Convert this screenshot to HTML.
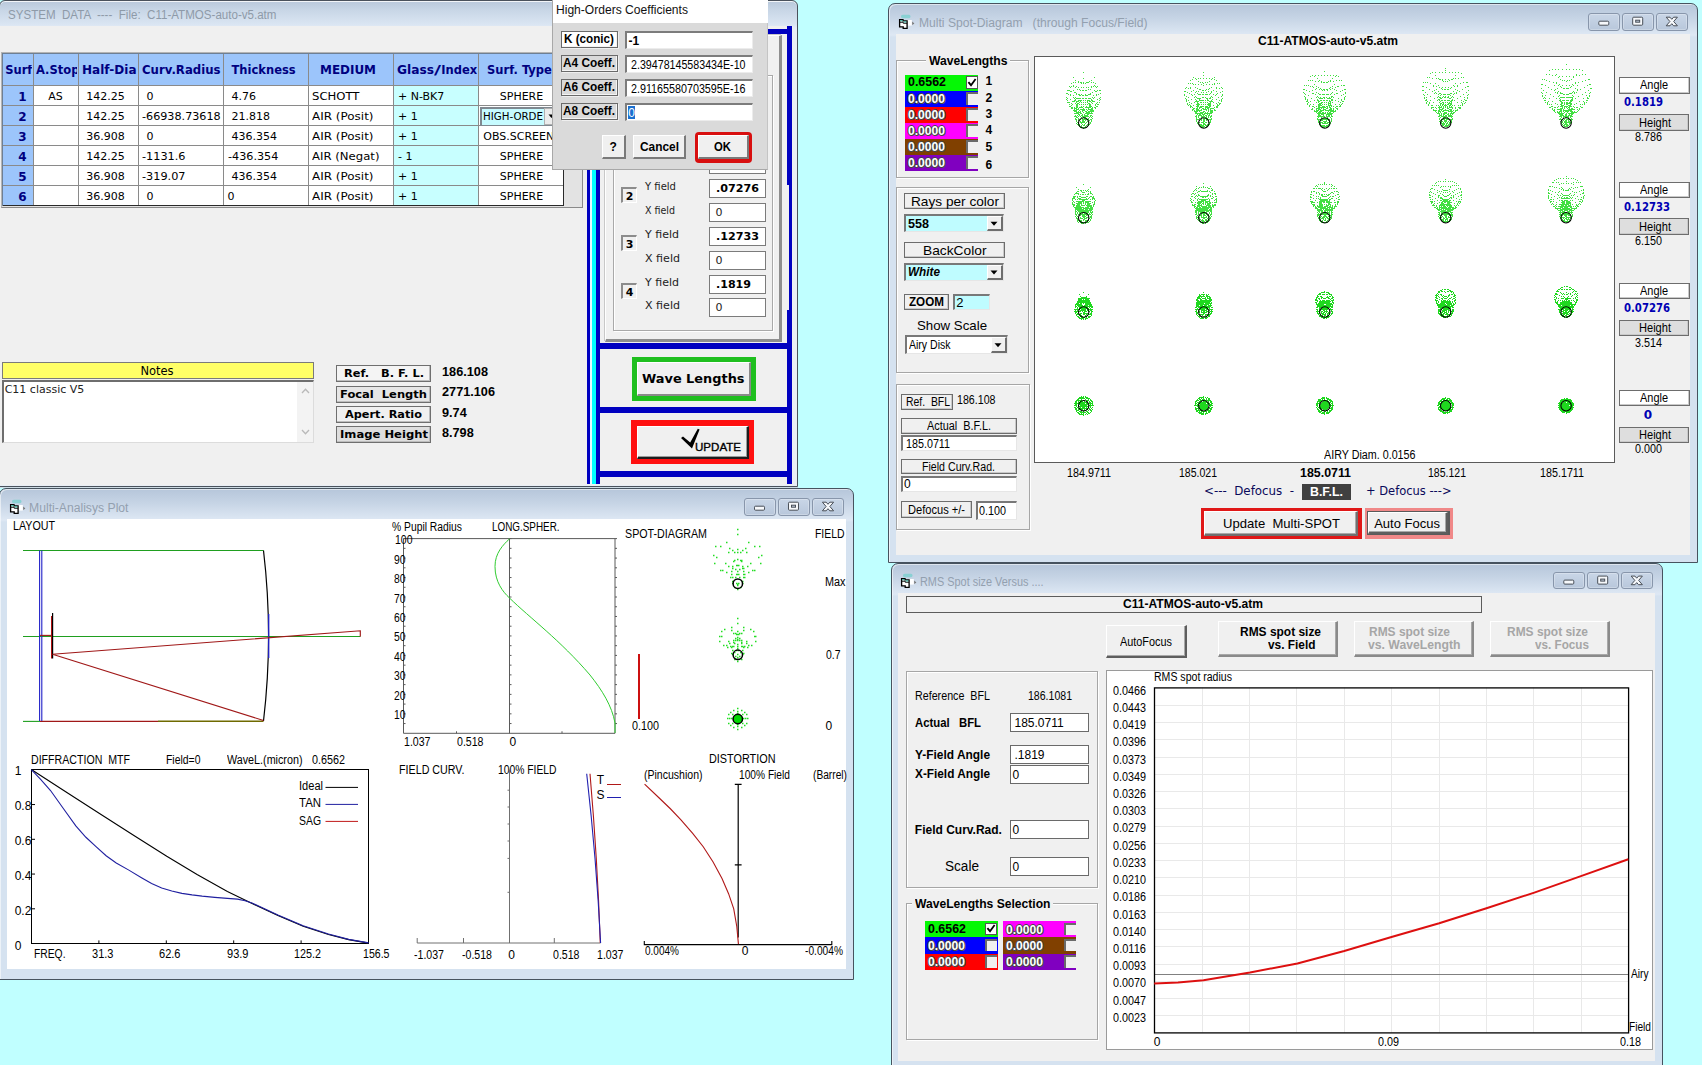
<!DOCTYPE html>
<html><head><meta charset="utf-8"><title>Optics workspace</title>
<style>
html,body{margin:0;padding:0}
body{width:1702px;height:1065px;overflow:hidden;background:#c0ffff;position:relative;font-family:"Liberation Sans",sans-serif}
.b{position:absolute;box-sizing:border-box;display:block}
.t{position:absolute;white-space:pre;transform-origin:0 0;color:#000}
svg{overflow:visible}
</style></head><body>
<div class="b" style="left:-1px;top:0px;width:799px;height:486.5px;background:linear-gradient(#bccbdd 2px,#c9d7e7 10px,#dbe6f3 24px,#e6edf6 27px,#e9eef5 30px);border:1px solid #4a525c;border-radius:6px 6px 0 0;box-shadow:inset 0 1px 0 rgba(255,255,255,.8);"></div>
<div class="b" style="left:0px;top:26px;width:793px;height:459px;background:#f0f0f0;"></div>
<div class="b" style="left:0px;top:487px;width:798px;height:1px;background:#cddbe4;"></div>
<span class="t" style="left:8.3px;top:8.55px;font:12px/12px 'Liberation Sans',sans-serif;color:#8e9aa8;transform:scaleX(0.964);">SYSTEM  DATA  ----  File:  C11-ATMOS-auto-v5.atm</span>
<div class="b" style="left:1px;top:52px;width:581.5px;height:156.3px;background:#e3e3e3;border:1px solid #8f8f8f;border-color:#b4b4b4 #8a8a8a #8a8a8a #b4b4b4;"></div>
<div class="b" style="left:2px;top:53px;width:561.5px;height:152.5px;background:#fff;"></div>
<div class="b" style="left:2px;top:53px;width:561.5px;height:32.5px;background:#9cc5fb;"></div>
<div class="b" style="left:2px;top:53px;width:31px;height:152.5px;background:#9cc5fb;"></div>
<div class="b" style="left:393.5px;top:85.5px;width:85px;height:120px;background:#c8ffff;"></div>
<div class="b" style="left:1.5px;top:53px;width:1px;height:152.5px;background:#8a8a8a;"></div>
<div class="b" style="left:32.5px;top:53px;width:1px;height:152.5px;background:#8a8a8a;"></div>
<div class="b" style="left:78px;top:53px;width:1px;height:152.5px;background:#8a8a8a;"></div>
<div class="b" style="left:138px;top:53px;width:1px;height:152.5px;background:#8a8a8a;"></div>
<div class="b" style="left:223px;top:53px;width:1px;height:152.5px;background:#8a8a8a;"></div>
<div class="b" style="left:308px;top:53px;width:1px;height:152.5px;background:#8a8a8a;"></div>
<div class="b" style="left:393px;top:53px;width:1px;height:152.5px;background:#8a8a8a;"></div>
<div class="b" style="left:478px;top:53px;width:1px;height:152.5px;background:#8a8a8a;"></div>
<div class="b" style="left:563px;top:53px;width:1px;height:152.5px;background:#8a8a8a;"></div>
<div class="b" style="left:2px;top:52.5px;width:561.5px;height:1px;background:#8a8a8a;"></div>
<div class="b" style="left:2px;top:85px;width:561.5px;height:1px;background:#8a8a8a;"></div>
<div class="b" style="left:2px;top:105px;width:561.5px;height:1px;background:#8a8a8a;"></div>
<div class="b" style="left:2px;top:125px;width:561.5px;height:1px;background:#8a8a8a;"></div>
<div class="b" style="left:2px;top:145px;width:561.5px;height:1px;background:#8a8a8a;"></div>
<div class="b" style="left:2px;top:165px;width:561.5px;height:1px;background:#8a8a8a;"></div>
<div class="b" style="left:2px;top:185px;width:561.5px;height:1px;background:#8a8a8a;"></div>
<div class="b" style="left:2px;top:205px;width:561.5px;height:1px;background:#8a8a8a;"></div>
<div class="b" style="left:2px;top:205px;width:562px;height:1px;background:#2a2a2a;"></div>
<div class="b" style="left:563px;top:53px;width:1px;height:153px;background:#2a2a2a;"></div>
<div class="b" style="left:1.5px;top:52.5px;width:562.5px;height:1px;background:#6d7f95;"></div>
<div class="b" style="left:1.5px;top:53px;width:1px;height:153px;background:#6d7f95;"></div>
<span class="t" style="left:5.2px;top:65.37px;font:bold 11.5px/11.5px 'DejaVu Sans','Liberation Sans',sans-serif;color:#000080;width:26.5px;overflow:hidden;padding-bottom:3px;">Surf</span>
<span class="t" style="left:36px;top:65.37px;font:bold 11.5px/11.5px 'DejaVu Sans','Liberation Sans',sans-serif;color:#000080;width:40.5px;overflow:hidden;padding-bottom:3px;">A.Stop</span>
<span class="t" style="left:82px;top:65.37px;font:bold 11.5px/11.5px 'DejaVu Sans','Liberation Sans',sans-serif;color:#000080;transform:scaleX(1.045);">Half-Dia</span>
<span class="t" style="left:142.3px;top:65.37px;font:bold 11.5px/11.5px 'DejaVu Sans','Liberation Sans',sans-serif;color:#000080;transform:scaleX(1.019);">Curv.Radius</span>
<span class="t" style="left:231.5px;top:65.37px;font:bold 11.5px/11.5px 'DejaVu Sans','Liberation Sans',sans-serif;color:#000080;">Thickness</span>
<span class="t" style="left:320px;top:65.37px;font:bold 11.5px/11.5px 'DejaVu Sans','Liberation Sans',sans-serif;color:#000080;transform:scaleX(1.039);">MEDIUM</span>
<span class="t" style="left:397px;top:65.37px;font:bold 11.5px/11.5px 'DejaVu Sans','Liberation Sans',sans-serif;color:#000080;transform:scaleX(1.062);">Glass</span>
<span class="t" style="left:434.4px;top:65.37px;font:bold 11.5px/11.5px 'DejaVu Sans','Liberation Sans',sans-serif;color:#000080;transform:scaleX(1.665);">/</span>
<span class="t" style="left:441.3px;top:65.37px;font:bold 11.5px/11.5px 'DejaVu Sans','Liberation Sans',sans-serif;color:#000080;width:36px;overflow:hidden;padding-bottom:3px;">Index</span>
<span class="t" style="left:487px;top:65.37px;font:bold 11.5px/11.5px 'DejaVu Sans','Liberation Sans',sans-serif;color:#000080;width:66px;overflow:hidden;padding-bottom:3px;">Surf. Type</span>
<span class="t" style="left:18.32px;top:90.85px;font:bold 12px/12px 'DejaVu Sans','Liberation Sans',sans-serif;color:#000080;">1</span>
<span class="t" style="left:48.24px;top:90.69px;font:11px/11px 'DejaVu Sans','Liberation Sans',sans-serif;">AS</span>
<span class="t" style="left:86.2px;top:90.69px;font:11px/11px 'DejaVu Sans','Liberation Sans',sans-serif;">142.25</span>
<span class="t" style="left:146.5px;top:90.69px;font:11px/11px 'DejaVu Sans','Liberation Sans',sans-serif;">0</span>
<span class="t" style="left:231.5px;top:90.69px;font:11px/11px 'DejaVu Sans','Liberation Sans',sans-serif;">4.76</span>
<span class="t" style="left:312.3px;top:90.69px;font:11px/11px 'DejaVu Sans','Liberation Sans',sans-serif;transform:scaleX(1.059);">SCHOTT</span>
<span class="t" style="left:398px;top:90.69px;font:11px/11px 'DejaVu Sans','Liberation Sans',sans-serif;">+ N-BK7</span>
<span class="t" style="left:499.78px;top:90.69px;font:11px/11px 'DejaVu Sans','Liberation Sans',sans-serif;">SPHERE</span>
<span class="t" style="left:18.32px;top:110.85px;font:bold 12px/12px 'DejaVu Sans','Liberation Sans',sans-serif;color:#000080;">2</span>
<span class="t" style="left:86.2px;top:110.69px;font:11px/11px 'DejaVu Sans','Liberation Sans',sans-serif;">142.25</span>
<span class="t" style="left:142.3px;top:110.69px;font:11px/11px 'DejaVu Sans','Liberation Sans',sans-serif;transform:scaleX(1.016);">-66938.73618</span>
<span class="t" style="left:231.5px;top:110.69px;font:11px/11px 'DejaVu Sans','Liberation Sans',sans-serif;">21.818</span>
<span class="t" style="left:312.3px;top:110.69px;font:11px/11px 'DejaVu Sans','Liberation Sans',sans-serif;transform:scaleX(1.087);">AIR (Posit)</span>
<span class="t" style="left:398px;top:110.69px;font:11px/11px 'DejaVu Sans','Liberation Sans',sans-serif;">+ 1</span>
<span class="t" style="left:18.32px;top:130.85px;font:bold 12px/12px 'DejaVu Sans','Liberation Sans',sans-serif;color:#000080;">3</span>
<span class="t" style="left:86.2px;top:130.69px;font:11px/11px 'DejaVu Sans','Liberation Sans',sans-serif;">36.908</span>
<span class="t" style="left:146.5px;top:130.69px;font:11px/11px 'DejaVu Sans','Liberation Sans',sans-serif;">0</span>
<span class="t" style="left:231.5px;top:130.69px;font:11px/11px 'DejaVu Sans','Liberation Sans',sans-serif;">436.354</span>
<span class="t" style="left:312.3px;top:130.69px;font:11px/11px 'DejaVu Sans','Liberation Sans',sans-serif;transform:scaleX(1.087);">AIR (Posit)</span>
<span class="t" style="left:398px;top:130.69px;font:11px/11px 'DejaVu Sans','Liberation Sans',sans-serif;">+ 1</span>
<span class="t" style="left:483.3px;top:130.69px;font:11px/11px 'DejaVu Sans','Liberation Sans',sans-serif;width:69.5px;overflow:hidden;padding-bottom:3px;">OBS.SCREEN</span>
<span class="t" style="left:18.32px;top:150.85px;font:bold 12px/12px 'DejaVu Sans','Liberation Sans',sans-serif;color:#000080;">4</span>
<span class="t" style="left:86.2px;top:150.69px;font:11px/11px 'DejaVu Sans','Liberation Sans',sans-serif;">142.25</span>
<span class="t" style="left:142.3px;top:150.69px;font:11px/11px 'DejaVu Sans','Liberation Sans',sans-serif;transform:scaleX(1.024);">-1131.6</span>
<span class="t" style="left:227.5px;top:150.69px;font:11px/11px 'DejaVu Sans','Liberation Sans',sans-serif;transform:scaleX(1.017);">-436.354</span>
<span class="t" style="left:312.3px;top:150.69px;font:11px/11px 'DejaVu Sans','Liberation Sans',sans-serif;transform:scaleX(1.062);">AIR (Negat)</span>
<span class="t" style="left:398px;top:150.69px;font:11px/11px 'DejaVu Sans','Liberation Sans',sans-serif;">- 1</span>
<span class="t" style="left:499.78px;top:150.69px;font:11px/11px 'DejaVu Sans','Liberation Sans',sans-serif;">SPHERE</span>
<span class="t" style="left:18.32px;top:170.85px;font:bold 12px/12px 'DejaVu Sans','Liberation Sans',sans-serif;color:#000080;">5</span>
<span class="t" style="left:86.2px;top:170.69px;font:11px/11px 'DejaVu Sans','Liberation Sans',sans-serif;">36.908</span>
<span class="t" style="left:142.3px;top:170.69px;font:11px/11px 'DejaVu Sans','Liberation Sans',sans-serif;transform:scaleX(1.024);">-319.07</span>
<span class="t" style="left:231.5px;top:170.69px;font:11px/11px 'DejaVu Sans','Liberation Sans',sans-serif;">436.354</span>
<span class="t" style="left:312.3px;top:170.69px;font:11px/11px 'DejaVu Sans','Liberation Sans',sans-serif;transform:scaleX(1.087);">AIR (Posit)</span>
<span class="t" style="left:398px;top:170.69px;font:11px/11px 'DejaVu Sans','Liberation Sans',sans-serif;">+ 1</span>
<span class="t" style="left:499.78px;top:170.69px;font:11px/11px 'DejaVu Sans','Liberation Sans',sans-serif;">SPHERE</span>
<span class="t" style="left:18.32px;top:190.85px;font:bold 12px/12px 'DejaVu Sans','Liberation Sans',sans-serif;color:#000080;">6</span>
<span class="t" style="left:86.2px;top:190.69px;font:11px/11px 'DejaVu Sans','Liberation Sans',sans-serif;">36.908</span>
<span class="t" style="left:146.5px;top:190.69px;font:11px/11px 'DejaVu Sans','Liberation Sans',sans-serif;">0</span>
<span class="t" style="left:227.5px;top:190.69px;font:11px/11px 'DejaVu Sans','Liberation Sans',sans-serif;">0</span>
<span class="t" style="left:312.3px;top:190.69px;font:11px/11px 'DejaVu Sans','Liberation Sans',sans-serif;transform:scaleX(1.087);">AIR (Posit)</span>
<span class="t" style="left:398px;top:190.69px;font:11px/11px 'DejaVu Sans','Liberation Sans',sans-serif;">+ 1</span>
<span class="t" style="left:499.78px;top:190.69px;font:11px/11px 'DejaVu Sans','Liberation Sans',sans-serif;">SPHERE</span>
<div class="b" style="left:479.5px;top:106.5px;width:73.5px;height:19px;background:#c6fbff;border:1px solid #7f8890;border-width:2px 0 1px 2px;"></div>
<span class="t" style="left:482.8px;top:110.89px;font:11px/11px 'DejaVu Sans','Liberation Sans',sans-serif;transform:scaleX(0.933);">HIGH-ORDE</span>
<div class="b" style="left:544.3px;top:108px;width:9.7px;height:17px;background:#ececec;border:1px solid #b0b0b0;"></div>
<svg class="b" style="left:547px;top:113px;" width="8" height="6" viewBox="547 113 8 6"><path d="M548.5 114.5 h6 l-3 3.5 z" fill="#000"/></svg>
<div class="b" style="left:2px;top:362px;width:311.5px;height:17px;background:#ffff66;border:1px solid #7a7a7a;"></div>
<span class="t" style="left:140.39px;top:365.87px;font:11.5px/11.5px 'DejaVu Sans','Liberation Sans',sans-serif;">Notes</span>
<div class="b" style="left:2px;top:380px;width:311.5px;height:62.5px;background:#fff;border:1px solid #8c8c8c;border-width:2px 1px 1px 2px;border-color:#6e6e6e #dcdcdc #dcdcdc #6e6e6e;"></div>
<span class="t" style="left:4.7px;top:383.99px;font:11px/11px 'DejaVu Sans','Liberation Sans',sans-serif;color:#222;">C11 classic V5</span>
<div class="b" style="left:297px;top:382px;width:15.5px;height:59.5px;background:#f3f3f3;"></div>
<svg class="b" style="left:299px;top:383px;" width="12" height="58" viewBox="299 383 12 58"><path d="M302 393 l3.5 -3.8 l3.5 3.8 M302 430 l3.5 3.8 l3.5 -3.8" fill="none" stroke="#b9b9b9" stroke-width="1.3"/></svg>
<div class="b" style="left:336px;top:365.3px;width:95px;height:16.5px;background:#f4f4f4;border:1px solid #6f6f6f;box-shadow:inset -1px -1px 0 #bdbdbd;"></div>
<span class="t" style="left:343.5px;top:368.29px;font:bold 11px/11px 'DejaVu Sans','Liberation Sans',sans-serif;transform:scaleX(1.035);">Ref.   B. F. L.</span>
<span class="t" style="left:442.3px;top:365.65px;font:bold 12px/12px 'Liberation Sans',sans-serif;transform:scaleX(1.060);">186.108</span>
<div class="b" style="left:336px;top:386px;width:95px;height:16.5px;background:#e6e6e6;border:1px solid #6f6f6f;box-shadow:inset -1px -1px 0 #bdbdbd;"></div>
<span class="t" style="left:340px;top:388.99px;font:bold 11px/11px 'DejaVu Sans','Liberation Sans',sans-serif;transform:scaleX(1.045);">Focal  Length</span>
<span class="t" style="left:442.3px;top:386.35px;font:bold 12px/12px 'Liberation Sans',sans-serif;transform:scaleX(1.059);">2771.106</span>
<div class="b" style="left:336px;top:406.3px;width:95px;height:16.5px;background:#f0f0f0;border:1px solid #6f6f6f;box-shadow:inset -1px -1px 0 #bdbdbd;"></div>
<span class="t" style="left:345px;top:409.29px;font:bold 11px/11px 'DejaVu Sans','Liberation Sans',sans-serif;transform:scaleX(1.026);">Apert. Ratio</span>
<span class="t" style="left:442.3px;top:406.65px;font:bold 12px/12px 'Liberation Sans',sans-serif;transform:scaleX(1.057);">9.74</span>
<div class="b" style="left:336px;top:426.3px;width:95px;height:16.5px;background:#dedede;border:1px solid #6f6f6f;box-shadow:inset -1px -1px 0 #bdbdbd;"></div>
<span class="t" style="left:339.5px;top:429.29px;font:bold 11px/11px 'DejaVu Sans','Liberation Sans',sans-serif;transform:scaleX(1.053);">Image Height</span>
<span class="t" style="left:442.3px;top:426.65px;font:bold 12px/12px 'Liberation Sans',sans-serif;transform:scaleX(1.056);">8.798</span>
<div class="b" style="left:587px;top:29px;width:3.2px;height:455px;background:#0000c0;"></div>
<div class="b" style="left:590.2px;top:29px;width:1.8px;height:455px;background:#e6fbff;"></div>
<div class="b" style="left:592px;top:29px;width:4px;height:455px;background:#00ffff;"></div>
<div class="b" style="left:596px;top:29px;width:4.2px;height:455px;background:#0000c0;"></div>
<div class="b" style="left:587px;top:29px;width:205px;height:4.5px;background:#0000c0;"></div>
<div class="b" style="left:786.5px;top:26px;width:5.5px;height:458px;background:#0000c0;"></div>
<div class="b" style="left:786px;top:185px;width:3px;height:125px;background:#f0f0f0;"></div>
<div class="b" style="left:596px;top:343px;width:196px;height:5.5px;background:#0000c0;"></div>
<div class="b" style="left:596px;top:407px;width:196px;height:6px;background:#0000c0;"></div>
<div class="b" style="left:596px;top:471px;width:196px;height:6px;background:#0000c0;"></div>
<div class="b" style="left:605px;top:35px;width:176.5px;height:306.5px;background:#f0f0f0;border:1px solid #fff;border-color:#fff #8e8e8e #8e8e8e #fff;border-width:1px 3px 3px 1px;box-shadow:-1px -1px 0 #c8c8c8;"></div>
<div class="b" style="left:613px;top:75px;width:160px;height:256px;border:1px solid #a9a9a9;box-shadow:1px 1px 0 #fff, inset 1px 1px 0 #fff;"></div>
<div class="b" style="left:709px;top:155.5px;width:57px;height:18.3px;background:#fff;border:1px solid #7b7b7b;"></div>
<div class="b" style="left:709px;top:179.4px;width:57px;height:18.3px;background:#fff;border:1px solid #7b7b7b;"></div>
<span class="t" style="left:715.5px;top:183.49px;font:bold 11px/11px 'DejaVu Sans','Liberation Sans',sans-serif;transform:scaleX(1.013);">.07276</span>
<span class="t" style="left:645px;top:180.89px;font:11px/11px 'DejaVu Sans','Liberation Sans',sans-serif;color:#222;transform:scaleX(0.913);">Y field</span>
<div class="b" style="left:709px;top:203.4px;width:57px;height:18.3px;background:#fff;border:1px solid #7b7b7b;"></div>
<span class="t" style="left:715.5px;top:207.09px;font:11px/11px 'DejaVu Sans','Liberation Sans',sans-serif;color:#222;">0</span>
<span class="t" style="left:645px;top:204.89px;font:11px/11px 'DejaVu Sans','Liberation Sans',sans-serif;color:#222;transform:scaleX(0.863);">X field</span>
<div class="b" style="left:709px;top:227.4px;width:57px;height:18.3px;background:#fff;border:1px solid #7b7b7b;"></div>
<span class="t" style="left:715.5px;top:231.49px;font:bold 11px/11px 'DejaVu Sans','Liberation Sans',sans-serif;transform:scaleX(1.013);">.12733</span>
<span class="t" style="left:645px;top:228.89px;font:11px/11px 'DejaVu Sans','Liberation Sans',sans-serif;color:#222;">Y field</span>
<div class="b" style="left:709px;top:251.4px;width:57px;height:18.3px;background:#fff;border:1px solid #7b7b7b;"></div>
<span class="t" style="left:715.5px;top:255.09px;font:11px/11px 'DejaVu Sans','Liberation Sans',sans-serif;color:#222;">0</span>
<span class="t" style="left:645px;top:252.89px;font:11px/11px 'DejaVu Sans','Liberation Sans',sans-serif;color:#222;transform:scaleX(1.006);">X field</span>
<div class="b" style="left:709px;top:275.4px;width:57px;height:18.3px;background:#fff;border:1px solid #7b7b7b;"></div>
<span class="t" style="left:715.5px;top:279.49px;font:bold 11px/11px 'DejaVu Sans','Liberation Sans',sans-serif;transform:scaleX(1.006);">.1819</span>
<span class="t" style="left:645px;top:276.89px;font:11px/11px 'DejaVu Sans','Liberation Sans',sans-serif;color:#222;">Y field</span>
<div class="b" style="left:709px;top:298.4px;width:57px;height:18.3px;background:#fff;border:1px solid #7b7b7b;"></div>
<span class="t" style="left:715.5px;top:302.09px;font:11px/11px 'DejaVu Sans','Liberation Sans',sans-serif;color:#222;">0</span>
<span class="t" style="left:645px;top:299.89px;font:11px/11px 'DejaVu Sans','Liberation Sans',sans-serif;color:#222;transform:scaleX(1.006);">X field</span>
<div class="b" style="left:621.3px;top:187px;width:15.6px;height:15.6px;background:#f0f0f0;border:1px solid #8a8a8a;border-width:2px 1px 1px 2px;border-color:#8c8c8c #fff #fff #8c8c8c;"></div>
<span class="t" style="left:625.67px;top:190.99px;font:bold 11px/11px 'DejaVu Sans','Liberation Sans',sans-serif;">2</span>
<div class="b" style="left:621.3px;top:235px;width:15.6px;height:15.6px;background:#f0f0f0;border:1px solid #8a8a8a;border-width:2px 1px 1px 2px;border-color:#8c8c8c #fff #fff #8c8c8c;"></div>
<span class="t" style="left:625.67px;top:238.99px;font:bold 11px/11px 'DejaVu Sans','Liberation Sans',sans-serif;">3</span>
<div class="b" style="left:621.3px;top:283.2px;width:15.6px;height:15.6px;background:#f0f0f0;border:1px solid #8a8a8a;border-width:2px 1px 1px 2px;border-color:#8c8c8c #fff #fff #8c8c8c;"></div>
<span class="t" style="left:625.67px;top:287.19px;font:bold 11px/11px 'DejaVu Sans','Liberation Sans',sans-serif;">4</span>
<div class="b" style="left:632px;top:357px;width:124px;height:44px;background:#1fbf1f;"></div>
<div class="b" style="left:637px;top:362px;width:113.5px;height:34px;background:#f0f0f0;border:1px solid #fff;border-color:#fff #8a8a8a #8a8a8a #fff;border-width:1px 2px 2px 1px;"></div>
<span class="t" style="left:642.25px;top:373.43px;font:bold 12.5px/12.5px 'DejaVu Sans','Liberation Sans',sans-serif;transform:scaleX(1.032);">Wave Lengths</span>
<div class="b" style="left:631px;top:420px;width:123px;height:44px;background:#ff1010;"></div>
<div class="b" style="left:637px;top:426px;width:111.5px;height:33px;background:#f0f0f0;border:1px solid #fff;border-color:#fff #1e1e1e #1e1e1e #fff;border-width:1px 2px 2px 1px;box-shadow:inset -1px -1px 0 #9a9a9a;"></div>
<span class="t" style="left:695.3px;top:441.77px;font:11.5px/11.5px 'Liberation Sans',sans-serif;transform:scaleX(1.004);-webkit-text-stroke:.35px #000;">UPDATE</span>
<svg class="b" style="left:680px;top:428px;" width="22" height="22" viewBox="680 428 22 22"><path d="M681 438 l2 -1.6 l7.2 6 l7.6 -13.6 l1.8 .6 l-7.6 19 z" fill="#000"/></svg>
<div class="b" style="left:551.7px;top:-1px;width:216.6px;height:170.8px;background:#dadada;border:1px solid #a8a8a8;border-right-color:#c4c4c4;"></div>
<div class="b" style="left:552.7px;top:0px;width:215.1px;height:23px;background:#fff;"></div>
<span class="t" style="left:556.3px;top:4.05px;font:12px/12px 'Liberation Sans',sans-serif;color:#111;transform:scaleX(1.006);">High-Orders Coefficients</span>
<div class="b" style="left:561px;top:31px;width:57px;height:16.5px;background:#fff;border:1px solid #6a6a6a;box-shadow:inset -1px -1px 0 #f4f4f4, 1px 1px 0 #efefef;"></div>
<span class="t" style="left:563.6px;top:33.35px;font:bold 12px/12px 'Liberation Sans',sans-serif;transform:scaleX(0.974);">K (conic)</span>
<div class="b" style="left:625px;top:31px;width:128px;height:18px;background:#fff;border:1px solid #777;border-width:2px 1px 1px 2px;border-color:#7c7c7c #ececec #ececec #7c7c7c;"></div>
<span class="t" style="left:628.5px;top:34.65px;font:bold 12px/12px 'Liberation Sans',sans-serif;">-1</span>
<div class="b" style="left:561px;top:55px;width:57px;height:16.5px;background:#dadada;border:1px solid #6a6a6a;box-shadow:inset -1px -1px 0 #f4f4f4, 1px 1px 0 #efefef;"></div>
<span class="t" style="left:562.6px;top:57.35px;font:bold 12px/12px 'Liberation Sans',sans-serif;transform:scaleX(0.987);">A4 Coeff.</span>
<div class="b" style="left:625px;top:55px;width:128px;height:18px;background:#fff;border:1px solid #777;border-width:2px 1px 1px 2px;border-color:#7c7c7c #ececec #ececec #7c7c7c;"></div>
<span class="t" style="left:630.8px;top:58.65px;font:12px/12px 'Liberation Sans',sans-serif;transform:scaleX(0.889);">2.39478145583434E-10</span>
<div class="b" style="left:561px;top:79px;width:57px;height:16.5px;background:#dadada;border:1px solid #6a6a6a;box-shadow:inset -1px -1px 0 #f4f4f4, 1px 1px 0 #efefef;"></div>
<span class="t" style="left:562.6px;top:81.35px;font:bold 12px/12px 'Liberation Sans',sans-serif;transform:scaleX(0.987);">A6 Coeff.</span>
<div class="b" style="left:625px;top:79px;width:128px;height:18px;background:#fff;border:1px solid #777;border-width:2px 1px 1px 2px;border-color:#7c7c7c #ececec #ececec #7c7c7c;"></div>
<span class="t" style="left:630.8px;top:82.65px;font:12px/12px 'Liberation Sans',sans-serif;transform:scaleX(0.895);">2.91165580703595E-16</span>
<div class="b" style="left:561px;top:103px;width:57px;height:16.5px;background:#dadada;border:1px solid #6a6a6a;box-shadow:inset -1px -1px 0 #f4f4f4, 1px 1px 0 #efefef;"></div>
<span class="t" style="left:562.6px;top:105.35px;font:bold 12px/12px 'Liberation Sans',sans-serif;transform:scaleX(0.987);">A8 Coeff.</span>
<div class="b" style="left:625px;top:103px;width:128px;height:18px;background:#fff;border:1px solid #777;border-width:2px 1px 1px 2px;border-color:#7c7c7c #ececec #ececec #7c7c7c;"></div>
<div class="b" style="left:628px;top:106px;width:6.5px;height:13px;background:#1a6fd0;"></div>
<span class="t" style="left:628.3px;top:106.65px;font:12px/12px 'Liberation Sans',sans-serif;color:#fff;">0</span>
<div class="b" style="left:601.5px;top:135.3px;width:24.5px;height:24.2px;background:#f0f0f0;border:1px solid #fff;border-color:#fff #7a7a7a #7a7a7a #fff;border-width:1px 2px 2px 1px;"></div>
<span class="t" style="left:609.58px;top:141.45px;font:bold 12px/12px 'Liberation Sans',sans-serif;">?</span>
<div class="b" style="left:633px;top:135.3px;width:53px;height:24.2px;background:#f0f0f0;border:1px solid #fff;border-color:#fff #7a7a7a #7a7a7a #fff;border-width:1px 2px 2px 1px;"></div>
<span class="t" style="left:639.5px;top:141.45px;font:bold 12px/12px 'Liberation Sans',sans-serif;transform:scaleX(0.991);">Cancel</span>
<div class="b" style="left:695px;top:132px;width:57px;height:30.7px;background:#d80f0f;border-radius:4px;"></div>
<div class="b" style="left:698px;top:135.3px;width:50.5px;height:24.2px;background:#f0f0f0;border:1px solid #fff;border-color:#fff #7a7a7a #7a7a7a #fff;border-width:1px 2px 2px 1px;"></div>
<span class="t" style="left:714.25px;top:141.45px;font:bold 12px/12px 'Liberation Sans',sans-serif;transform:scaleX(0.944);">OK</span>
<div class="b" style="left:-1px;top:488px;width:855.3px;height:492.3px;background:linear-gradient(#b6c6da 0px,#c6d4e5 13.95px,#dee8f4 31px,#d5e2f0 33px);border:1px solid #47535f;border-radius:7px 7px 0 0;box-shadow:inset 1px 1px 0 rgba(255,255,255,.55);"></div>
<div class="b" style="left:7px;top:519px;width:839px;height:449.7px;background:#fff;"></div>
<svg class="b" style="left:9px;top:499px;" width="18" height="16" viewBox="9 499 18 16"><rect x="12" y="499.8" width="9.5" height="3.4" rx="1.6" fill="#4fd0c4" opacity=".5"/><rect x="17.6" y="505" width="5.2" height="5.6" fill="#fff"/><path d="M10.6 504.6 h3.4 v1.2 h4.1 v7.5 h-3.9 v-1.4 h-3.6 z" fill="#fff" stroke="#000" stroke-width="1.3" stroke-linejoin="miter"/><path d="M10.6 507.2 h3.6 v1 h3.9" stroke="#000" stroke-width="1" fill="none"/><path d="M11.3 505.7 h2.3 M14.7 506.9 h2.6" stroke="#35c9b2" stroke-width="1" fill="none"/><path d="M23.2 506.6 l2.2 1.8 l-2.2 1.6 z" fill="#777"/></svg>
<span class="t" style="left:29.3px;top:501.55px;font:12px/12px 'Liberation Sans',sans-serif;color:#93a0af;transform:scaleX(1.015);">Multi-Analisys Plot</span>
<div class="b" style="left:744px;top:498.3px;width:31.5px;height:17.3px;background:linear-gradient(#c9d6e7,#b8c7db);border:1px solid #8896ab;border-radius:3px;box-shadow:inset 0 0 0 1px rgba(255,255,255,.25);"></div>
<svg class="b" style="left:744px;top:498.3px;" width="31.5" height="17.3" viewBox="744 498.3 31.5 17.3"><rect x="754.5" y="506.5" width="10" height="4" rx="1" fill="#f6f8fb" stroke="#474d56" stroke-width="1"/></svg>
<div class="b" style="left:778px;top:498.3px;width:31.8px;height:17.3px;background:linear-gradient(#c9d6e7,#b8c7db);border:1px solid #8896ab;border-radius:3px;box-shadow:inset 0 0 0 1px rgba(255,255,255,.25);"></div>
<svg class="b" style="left:778px;top:498.3px;" width="31.8" height="17.3" viewBox="778 498.3 31.8 17.3"><rect x="788.5" y="502.5" width="10" height="8" rx="1" fill="#f6f8fb" stroke="#474d56" stroke-width="1"/><rect x="791.5" y="505.5" width="4" height="2" fill="#c3cedd" stroke="#474d56" stroke-width="1"/></svg>
<div class="b" style="left:811.9px;top:498.3px;width:32.6px;height:17.3px;background:linear-gradient(#c9d6e7,#b8c7db);border:1px solid #8896ab;border-radius:3px;box-shadow:inset 0 0 0 1px rgba(255,255,255,.25);"></div>
<svg class="b" style="left:811.9px;top:498.3px;" width="32.6" height="17.3" viewBox="811.9 498.3 32.6 17.3"><path d="M822.3 502.5 h3.8 l1.8 2.09 l1.8 -2.09 h3.8 l-3.7 4.3 l3.7 4.3 h-3.8 l-1.8 -2.09 l-1.8 2.09 h-3.8 l3.7 -4.3 z" fill="#f6f8fb" stroke="#474d56" stroke-width="1" stroke-linejoin="round"/></svg>
<span class="t" style="left:13.2px;top:520.35px;font:12px/12px 'Liberation Sans',sans-serif;transform:scaleX(0.891);">LAYOUT</span>
<svg class="b" style="left:0px;top:540px;" width="380" height="190" viewBox="0 540 380 190"><path d="M23 550.5 H263.5 M23 636.5 H360.5" stroke="#1f9f1f" stroke-width="1.1" fill="none"/><path d="M23 721.4 H40" stroke="#1f9f1f" stroke-width="1.1"/><path d="M40 721.4 H158" stroke="#a01818" stroke-width="1.2"/><path d="M158 721.2 H263.5" stroke="#6f6a00" stroke-width="1.4"/><path d="M39.6 550.5 V721 M41.8 550.5 V721" stroke="#2222c8" stroke-width="1.1" fill="none"/><path d="M263.5 550.5 Q273.6 635.8 263.5 721" stroke="#000" stroke-width="1.2" fill="none"/><path d="M268.7 614 V658" stroke="#2222c8" stroke-width="1.3"/><path d="M52.6 613 V658.5" stroke="#000" stroke-width="1.2"/><path d="M51.5 616 V658.5" stroke="#b01010" stroke-width="1"/><path d="M40 635.4 H52" stroke="#a01818" stroke-width="1.1"/><path d="M263.5 720.5 L52.5 654.3 L360.3 630.8 V636.5" stroke="#a01818" stroke-width="1.15" fill="none"/></svg>
<span class="t" style="left:391.8px;top:520.65px;font:12px/12px 'Liberation Sans',sans-serif;transform:scaleX(0.860);">% Pupil Radius</span>
<span class="t" style="left:492.2px;top:520.65px;font:12px/12px 'Liberation Sans',sans-serif;transform:scaleX(0.823);">LONG.SPHER.</span>
<svg class="b" style="left:395px;top:535px;" width="230" height="205" viewBox="395 535 230 205"><path d="M403.5 538.6 H615 M403.5 538.6 V733.3 H615 M509.5 538.6 V733.3 M615 538.6 V733.3" stroke="#5a5a5a" stroke-width="1" fill="none"/><path d="M403.5 723.56 h2 M509.5 723.56 h2 M615 723.56 h2 M403.5 713.83 h2 M509.5 713.83 h2 M615 713.83 h2 M403.5 704.09 h2 M509.5 704.09 h2 M615 704.09 h2 M403.5 694.36 h2 M509.5 694.36 h2 M615 694.36 h2 M403.5 684.62 h2 M509.5 684.62 h2 M615 684.62 h2 M403.5 674.89 h2 M509.5 674.89 h2 M615 674.89 h2 M403.5 665.15 h2 M509.5 665.15 h2 M615 665.15 h2 M403.5 655.42 h2 M509.5 655.42 h2 M615 655.42 h2 M403.5 645.68 h2 M509.5 645.68 h2 M615 645.68 h2 M403.5 635.95 h2 M509.5 635.95 h2 M615 635.95 h2 M403.5 626.21 h2 M509.5 626.21 h2 M615 626.21 h2 M403.5 616.48 h2 M509.5 616.48 h2 M615 616.48 h2 M403.5 606.75 h2 M509.5 606.75 h2 M615 606.75 h2 M403.5 597.01 h2 M509.5 597.01 h2 M615 597.01 h2 M403.5 587.27 h2 M509.5 587.27 h2 M615 587.27 h2 M403.5 577.54 h2 M509.5 577.54 h2 M615 577.54 h2 M403.5 567.8 h2 M509.5 567.8 h2 M615 567.8 h2 M403.5 558.07 h2 M509.5 558.07 h2 M615 558.07 h2 M403.5 548.34 h2 M509.5 548.34 h2 M615 548.34 h2 M403.5 538.6 h2 M509.5 538.6 h2 M615 538.6 h2 M456.5 733.3 v-2 M562 733.3 v-2" stroke="#5a5a5a" stroke-width="1" fill="none"/><path d="M509.5 538.8 C503 545 495 553 495 566.5 C495 582 503 592 509.5 598 C530 618 560 640 590 675 C602 690 612 706 615 723 V733" stroke="#30cc30" stroke-width="1" fill="none"/></svg>
<span class="t" style="left:394.7px;top:534.35px;font:12px/12px 'Liberation Sans',sans-serif;transform:scaleX(0.874);">100</span>
<span class="t" style="left:394.3px;top:553.75px;font:12px/12px 'Liberation Sans',sans-serif;transform:scaleX(0.861);">90</span>
<span class="t" style="left:394.3px;top:573.15px;font:12px/12px 'Liberation Sans',sans-serif;transform:scaleX(0.861);">80</span>
<span class="t" style="left:394.3px;top:592.55px;font:12px/12px 'Liberation Sans',sans-serif;transform:scaleX(0.861);">70</span>
<span class="t" style="left:394.3px;top:611.95px;font:12px/12px 'Liberation Sans',sans-serif;transform:scaleX(0.861);">60</span>
<span class="t" style="left:394.3px;top:631.35px;font:12px/12px 'Liberation Sans',sans-serif;transform:scaleX(0.861);">50</span>
<span class="t" style="left:394.3px;top:650.75px;font:12px/12px 'Liberation Sans',sans-serif;transform:scaleX(0.861);">40</span>
<span class="t" style="left:394.3px;top:670.15px;font:12px/12px 'Liberation Sans',sans-serif;transform:scaleX(0.861);">30</span>
<span class="t" style="left:394.3px;top:689.55px;font:12px/12px 'Liberation Sans',sans-serif;transform:scaleX(0.861);">20</span>
<span class="t" style="left:394.3px;top:708.95px;font:12px/12px 'Liberation Sans',sans-serif;transform:scaleX(0.861);">10</span>
<span class="t" style="left:404px;top:735.85px;font:12px/12px 'Liberation Sans',sans-serif;transform:scaleX(0.882);">1.037</span>
<span class="t" style="left:456.7px;top:735.85px;font:12px/12px 'Liberation Sans',sans-serif;transform:scaleX(0.882);">0.518</span>
<span class="t" style="left:509.4px;top:735.85px;font:12px/12px 'Liberation Sans',sans-serif;">0</span>
<span class="t" style="left:625.3px;top:527.85px;font:12px/12px 'Liberation Sans',sans-serif;transform:scaleX(0.891);">SPOT-DIAGRAM</span>
<span class="t" style="left:815px;top:527.85px;font:12px/12px 'Liberation Sans',sans-serif;transform:scaleX(0.867);">FIELD</span>
<span class="t" style="left:825px;top:575.85px;font:12px/12px 'Liberation Sans',sans-serif;transform:scaleX(0.904);">Max</span>
<span class="t" style="left:825.6px;top:649.05px;font:12px/12px 'Liberation Sans',sans-serif;transform:scaleX(0.869);">0.7</span>
<span class="t" style="left:825.6px;top:719.85px;font:12px/12px 'Liberation Sans',sans-serif;">0</span>
<span class="t" style="left:632.4px;top:719.85px;font:12px/12px 'Liberation Sans',sans-serif;transform:scaleX(0.899);">0.100</span>
<div class="b" style="left:638.3px;top:653.6px;width:1.4px;height:65.4px;background:#cc1010;"></div>
<svg class="b" style="left:700px;top:525px;" width="80" height="205" viewBox="700 525 80 205"><path d="M737 529.5h1.5M737 534.5h1.5M726 542.5h1.5M748 542.5h1.5M715 546.5h1.5M720 546.5h1.5M754 546.5h1.5M759 546.5h1.5M729 548.5h1.5M745 548.5h1.5M737 549.5h1.5M732 550.5h1.5M742 550.5h1.5M728 552.5h1.5M734 552.5h1.5M737 552.5h1.5M740 552.5h1.5M746 552.5h1.5M713 555.5h1.5M761 555.5h1.5M716 557.5h1.5M758 557.5h1.5M737 559.5h1.5M734 560.5h1.5M740 560.5h2.5M733 561.5h1.5M741 561.5h1.5M714 563.5h1.5M725 563.5h1.5M750 563.5h1.5M760 563.5h1.5M736 565.5h3.5M728 566.5h1.5M732 566.5h1.5M742 566.5h1.5M747 566.5h1.5M732 568.5h1.5M742 568.5h2.5M735 569.5h1.5M739 569.5h1.5M720 570.5h1.5M722 570.5h1.5M752 570.5h1.5M754 570.5h1.5M731 571.5h1.5M737 571.5h1.5M743 571.5h1.5M726 572.5h1.5M748 572.5h1.5M731 574.5h1.5M736 574.5h3.5M743 574.5h2.5M730 577.5h1.5M732 577.5h1.5M735 577.5h1.5M739 577.5h1.5M743 577.5h2.5M732 581.5h1.5M742 581.5h1.5M732 583.5h1.5M736 583.5h1.5M738 583.5h1.5M742 583.5h1.5M737 584.5h1.5M737 585.5h1.5M734 587.5h1.5M740 587.5h1.5M737 589.5h1.5M737 618.5h1.5M737 623.5h1.5M731 627.5h1.5M743 627.5h1.5M724 629.5h1.5M750 629.5h1.5M731 630.5h1.5M743 630.5h1.5M721 631.5h1.5M737 631.5h1.5M753 631.5h1.5M733 633.5h1.5M735 633.5h1.5M739 633.5h1.5M741 633.5h1.5M736 634.5h3.5M719 636.5h1.5M721 636.5h1.5M754 636.5h2.5M737 637.5h1.5M735 638.5h1.5M739 638.5h1.5M737 639.5h1.5M733 640.5h1.5M735 640.5h1.5M737 640.5h1.5M739 640.5h1.5M741 640.5h1.5M719 641.5h1.5M728 641.5h1.5M746 641.5h1.5M755 641.5h1.5M733 642.5h1.5M741 642.5h1.5M729 643.5h1.5M734 643.5h1.5M741 643.5h1.5M746 643.5h1.5M737 644.5h1.5M723 645.5h1.5M726 645.5h1.5M748 645.5h1.5M751 645.5h1.5M730 646.5h1.5M732 646.5h2.5M737 646.5h1.5M741 646.5h2.5M744 646.5h1.5M727 647.5h1.5M731 647.5h1.5M743 647.5h1.5M747 647.5h1.5M737 648.5h1.5M732 650.5h1.5M736 650.5h1.5M738 650.5h1.5M742 650.5h1.5M734 652.5h1.5M740 652.5h1.5M731 653.5h1.5M743 653.5h1.5M732 654.5h1.5M737 654.5h1.5M742 654.5h1.5M735 656.5h1.5M739 656.5h1.5M737 657.5h1.5M734 659.5h1.5M737 659.5h1.5M741 659.5h1.5M737 661.5h1.5M737 708.5h1.5M733 710.5h1.5M741 710.5h1.5M737 711.5h1.5M730 712.5h1.5M744 712.5h1.5M737 713.5h1.5M728 714.5h1.5M732 714.5h1.5M736 714.5h1.5M738 714.5h1.5M742 714.5h1.5M746 714.5h1.5M736 716.5h4.5M733 717.5h1.5M735 717.5h1.5M737 717.5h3.5M741 717.5h1.5M727 718.5h1.5M729 718.5h1.5M731 718.5h1.5M735 718.5h6.5M743 718.5h1.5M745 718.5h1.5M747 718.5h1.5M735 719.5h5.5M733 720.5h1.5M735 720.5h5.5M741 720.5h1.5M736 721.5h3.5M728 723.5h1.5M732 723.5h1.5M736 723.5h1.5M738 723.5h1.5M742 723.5h1.5M746 723.5h1.5M737 724.5h1.5M730 725.5h1.5M744 725.5h1.5M737 726.5h1.5M733 727.5h1.5M741 727.5h1.5M737 729.5h1.5" stroke="#22dd22" stroke-width="1.5" fill="none"/><circle cx="737.8" cy="719" r="5" fill="#00d800"/><circle cx="737.8" cy="583.7" r="4.7" fill="none" stroke="#000" stroke-width="1.5"/><circle cx="737.8" cy="654.8" r="4.7" fill="none" stroke="#000" stroke-width="1.5"/><circle cx="737.8" cy="719" r="4.7" fill="none" stroke="#000" stroke-width="1.5"/></svg>
<span class="t" style="left:31.3px;top:753.95px;font:12px/12px 'Liberation Sans',sans-serif;transform:scaleX(0.884);">DIFFRACTION  MTF</span>
<span class="t" style="left:166.2px;top:753.95px;font:12px/12px 'Liberation Sans',sans-serif;transform:scaleX(0.869);">Field=0</span>
<span class="t" style="left:227.4px;top:753.95px;font:12px/12px 'Liberation Sans',sans-serif;transform:scaleX(0.896);">WaveL.(micron)</span>
<span class="t" style="left:311.5px;top:753.95px;font:12px/12px 'Liberation Sans',sans-serif;transform:scaleX(0.899);">0.6562</span>
<div class="b" style="left:31px;top:769.3px;width:338px;height:174.6px;border:1px solid #000;"></div>
<span class="t" style="left:14.7px;top:765.45px;font:12px/12px 'Liberation Sans',sans-serif;">1</span>
<span class="t" style="left:14.7px;top:800.35px;font:12px/12px 'Liberation Sans',sans-serif;">0.8</span>
<span class="t" style="left:14.7px;top:835.25px;font:12px/12px 'Liberation Sans',sans-serif;">0.6</span>
<span class="t" style="left:14.7px;top:870.15px;font:12px/12px 'Liberation Sans',sans-serif;">0.4</span>
<span class="t" style="left:14.7px;top:905.05px;font:12px/12px 'Liberation Sans',sans-serif;">0.2</span>
<span class="t" style="left:14.7px;top:939.95px;font:12px/12px 'Liberation Sans',sans-serif;">0</span>
<svg class="b" style="left:20px;top:765px;" width="360" height="185" viewBox="20 765 360 185"><path d="M31 804.55 h4 M31 839.3 h4 M31 874.05 h4 M31 908.8 h4 M98.9 943.4 v-3 M166.3 943.4 v-3 M233.7 943.4 v-3 M301.1 943.4 v-3 " stroke="#000" stroke-width="1" fill="none"/><polyline points="31.33,769.56 65.69,791.79 101.06,814.53 133.91,835.5 166.75,856.22 197.07,874.41 227.39,891.59 252.65,903.72 277.92,915.59 303.18,926.21 328.45,934.54 348.66,939.6 368.62,943.13" fill="none" stroke="#000" stroke-width="1.1"/><polyline points="31.33,769.56 40.42,779.16 50.53,790.53 63.16,808.22 75.8,825.9 85.9,837.27 96.01,846.62 106.11,855.72 116.22,863.04 128.85,870.12 141.49,877.7 151.59,883.51 161.7,888.05 171.8,891.09 181.91,893.36 192.02,894.88 202.12,896.14 214.75,897.4 227.39,898.41 237.49,899.17 245.07,900.69 252.65,903.21 277.92,915.09 303.18,925.7 328.45,934.04 348.66,939.34 368.62,942.88" fill="none" stroke="#2020a0" stroke-width="1.1"/><path d="M325.5 787.4 H358" stroke="#000" stroke-width="1"/><path d="M325.5 804.4 H358" stroke="#2020a0" stroke-width="1"/><path d="M325.5 821.4 H358" stroke="#c01818" stroke-width="1"/></svg>
<span class="t" style="left:298.9px;top:780.05px;font:12px/12px 'Liberation Sans',sans-serif;transform:scaleX(0.922);">Ideal</span>
<span class="t" style="left:298.9px;top:796.95px;font:12px/12px 'Liberation Sans',sans-serif;transform:scaleX(0.952);">TAN</span>
<span class="t" style="left:298.9px;top:814.65px;font:12px/12px 'Liberation Sans',sans-serif;transform:scaleX(0.868);">SAG</span>
<span class="t" style="left:34px;top:948.05px;font:12px/12px 'Liberation Sans',sans-serif;transform:scaleX(0.859);">FREQ.</span>
<span class="t" style="left:91.5px;top:948.05px;font:12px/12px 'Liberation Sans',sans-serif;transform:scaleX(0.920);">31.3</span>
<span class="t" style="left:159.2px;top:948.05px;font:12px/12px 'Liberation Sans',sans-serif;transform:scaleX(0.920);">62.6</span>
<span class="t" style="left:227.4px;top:948.05px;font:12px/12px 'Liberation Sans',sans-serif;transform:scaleX(0.920);">93.9</span>
<span class="t" style="left:294.3px;top:948.05px;font:12px/12px 'Liberation Sans',sans-serif;transform:scaleX(0.899);">125.2</span>
<span class="t" style="left:363px;top:948.05px;font:12px/12px 'Liberation Sans',sans-serif;transform:scaleX(0.882);">156.5</span>
<span class="t" style="left:399.2px;top:764.05px;font:12px/12px 'Liberation Sans',sans-serif;transform:scaleX(0.893);">FIELD CURV.</span>
<span class="t" style="left:498.4px;top:764.05px;font:12px/12px 'Liberation Sans',sans-serif;transform:scaleX(0.860);">100% FIELD</span>
<svg class="b" style="left:410px;top:765px;" width="215" height="185" viewBox="410 765 215 185"><path d="M509.5 769.6 V943 M417.2 943 H600.5" stroke="#707070" stroke-width="1" fill="none"/><path d="M417.2 943 v-5 M463.5 943 v-5 M554.3 943 v-5 M600.5 943 v-5 M509.5 790.2 h-2 M509.5 807 h-2 M509.5 824 h-2 M509.5 841 h-2 M509.5 858.4 h-2 M509.5 892.3 h-2 " stroke="#707070" stroke-width="1" fill="none"/><path d="M590 773.8 Q597.5 860 600.3 943" stroke="#b01818" stroke-width="1.1" fill="none"/><path d="M586.7 773.8 Q596.5 860 600.6 943" stroke="#2020b0" stroke-width="1.1" fill="none"/><path d="M607 784.5 H621" stroke="#b01818" stroke-width="1"/><path d="M607 797.5 H621" stroke="#2020b0" stroke-width="1"/></svg>
<span class="t" style="left:596.8px;top:774.45px;font:12px/12px 'Liberation Sans',sans-serif;">T</span>
<span class="t" style="left:596.6px;top:789.45px;font:12px/12px 'Liberation Sans',sans-serif;">S</span>
<span class="t" style="left:414.4px;top:949.35px;font:12px/12px 'Liberation Sans',sans-serif;transform:scaleX(0.882);">-1.037</span>
<span class="t" style="left:461.8px;top:949.35px;font:12px/12px 'Liberation Sans',sans-serif;transform:scaleX(0.882);">-0.518</span>
<span class="t" style="left:508.3px;top:949.35px;font:12px/12px 'Liberation Sans',sans-serif;">0</span>
<span class="t" style="left:552.6px;top:949.35px;font:12px/12px 'Liberation Sans',sans-serif;transform:scaleX(0.882);">0.518</span>
<span class="t" style="left:596.6px;top:949.35px;font:12px/12px 'Liberation Sans',sans-serif;transform:scaleX(0.882);">1.037</span>
<span class="t" style="left:709.4px;top:753.35px;font:12px/12px 'Liberation Sans',sans-serif;transform:scaleX(0.904);">DISTORTION</span>
<span class="t" style="left:644.2px;top:769.35px;font:12px/12px 'Liberation Sans',sans-serif;transform:scaleX(0.877);">(Pincushion)</span>
<span class="t" style="left:738.7px;top:769.35px;font:12px/12px 'Liberation Sans',sans-serif;transform:scaleX(0.849);">100% Field</span>
<span class="t" style="left:812.9px;top:769.35px;font:12px/12px 'Liberation Sans',sans-serif;transform:scaleX(0.850);">(Barrel)</span>
<svg class="b" style="left:640px;top:780px;" width="200" height="170" viewBox="640 780 200 170"><path d="M738.2 784.3 V937.5 M734.8 784.3 h6.8 M734.8 864.9 h6.8" stroke="#000" stroke-width="1.2" fill="none"/><path d="M644.3 941 V944.6 H831.8 V941" stroke="#000" stroke-width="1.1" fill="none"/><polyline points="644.58,784.11 658.66,797.48 670.39,808.75 680.95,819.77 692.68,833.38 703.24,846.76 713.09,862.01 722.01,878.43 728.58,893.68 733.74,908.93 736.79,926.53 738.43,944.13" fill="none" stroke="#b01818" stroke-width="1.1"/></svg>
<span class="t" style="left:645px;top:945.05px;font:12px/12px 'Liberation Sans',sans-serif;transform:scaleX(0.835);">0.004%</span>
<span class="t" style="left:741.8px;top:945.05px;font:12px/12px 'Liberation Sans',sans-serif;">0</span>
<span class="t" style="left:805px;top:945.05px;font:12px/12px 'Liberation Sans',sans-serif;transform:scaleX(0.850);">-0.004%</span>
<div class="b" style="left:888px;top:3px;width:810.3px;height:559.8px;background:linear-gradient(#b6c6da 0px,#c6d4e5 13.95px,#dee8f4 31px,#d5e2f0 33px);border:1px solid #47535f;border-radius:7px 7px 0 0;box-shadow:inset 1px 1px 0 rgba(255,255,255,.55);"></div>
<div class="b" style="left:896px;top:34px;width:794px;height:521px;background:#f0f0f0;"></div>
<svg class="b" style="left:898px;top:14px;" width="18" height="16" viewBox="898 14 18 16"><rect x="901" y="14.8" width="9.5" height="3.4" rx="1.6" fill="#4fd0c4" opacity=".5"/><rect x="906.6" y="20" width="5.2" height="5.6" fill="#fff"/><path d="M899.6 19.6 h3.4 v1.2 h4.1 v7.5 h-3.9 v-1.4 h-3.6 z" fill="#fff" stroke="#000" stroke-width="1.3" stroke-linejoin="miter"/><path d="M899.6 22.2 h3.6 v1 h3.9" stroke="#000" stroke-width="1" fill="none"/><path d="M900.3 20.7 h2.3 M903.7 21.9 h2.6" stroke="#35c9b2" stroke-width="1" fill="none"/><path d="M912.2 21.6 l2.2 1.8 l-2.2 1.6 z" fill="#777"/></svg>
<span class="t" style="left:918.6px;top:16.85px;font:12px/12px 'Liberation Sans',sans-serif;color:#93a0af;transform:scaleX(1.008);">Multi Spot-Diagram   (through Focus/Field)</span>
<div class="b" style="left:1587.7px;top:13.3px;width:32.1px;height:17.4px;background:linear-gradient(#c9d6e7,#b8c7db);border:1px solid #8896ab;border-radius:3px;box-shadow:inset 0 0 0 1px rgba(255,255,255,.25);"></div>
<svg class="b" style="left:1587.7px;top:13.3px;" width="32.1" height="17.4" viewBox="1587.7 13.3 32.1 17.4"><rect x="1598.5" y="21.5" width="10" height="4" rx="1" fill="#f6f8fb" stroke="#474d56" stroke-width="1"/></svg>
<div class="b" style="left:1621.8px;top:13.3px;width:32px;height:17.4px;background:linear-gradient(#c9d6e7,#b8c7db);border:1px solid #8896ab;border-radius:3px;box-shadow:inset 0 0 0 1px rgba(255,255,255,.25);"></div>
<svg class="b" style="left:1621.8px;top:13.3px;" width="32" height="17.4" viewBox="1621.8 13.3 32 17.4"><rect x="1632.5" y="17.5" width="10" height="8" rx="1" fill="#f6f8fb" stroke="#474d56" stroke-width="1"/><rect x="1635.5" y="20.5" width="4" height="2" fill="#c3cedd" stroke="#474d56" stroke-width="1"/></svg>
<div class="b" style="left:1655.7px;top:13.3px;width:32.2px;height:17.4px;background:linear-gradient(#c9d6e7,#b8c7db);border:1px solid #8896ab;border-radius:3px;box-shadow:inset 0 0 0 1px rgba(255,255,255,.25);"></div>
<svg class="b" style="left:1655.7px;top:13.3px;" width="32.2" height="17.4" viewBox="1655.7 13.3 32.2 17.4"><path d="M1665.9 17.5 h3.8 l1.8 2.09 l1.8 -2.09 h3.8 l-3.7 4.3 l3.7 4.3 h-3.8 l-1.8 -2.09 l-1.8 2.09 h-3.8 l3.7 -4.3 z" fill="#f6f8fb" stroke="#474d56" stroke-width="1" stroke-linejoin="round"/></svg>
<span class="t" style="left:1258.4px;top:35.15px;font:bold 12px/12px 'Liberation Sans',sans-serif;transform:scaleX(1.006);">C11-ATMOS-auto-v5.atm</span>
<div class="b" style="left:896.3px;top:60.3px;width:133.2px;height:117.7px;border:1px solid #a6a6a6;box-shadow:1px 1px 0 #fff, inset 1px 1px 0 #fff;"></div>
<div class="b" style="left:926px;top:55px;width:84px;height:13px;background:#f0f0f0;"></div>
<span class="t" style="left:929.1px;top:55.05px;font:bold 12px/12px 'Liberation Sans',sans-serif;transform:scaleX(1.012);">WaveLengths</span>
<div class="b" style="left:905px;top:74.5px;width:73px;height:16.1px;background:#05f805;"></div>
<span class="t" style="left:907.7px;top:75.95px;font:bold 12px/12px 'Liberation Sans',sans-serif;transform:scaleX(1.035);">0.6562</span>
<div class="b" style="left:965.5px;top:76px;width:12px;height:12.5px;background:#fff;border:1px solid #777;border-width:1px;border-color:#555;"></div>
<svg class="b" style="left:965.5px;top:75.5px;" width="13" height="13" viewBox="965.5 75.5 13 13"><path d="M967.9 81.7 l2.6 3 l4.6 -6.2" fill="none" stroke="#000" stroke-width="1.8"/></svg>
<span class="t" style="left:985.6px;top:75.35px;font:bold 12px/12px 'Liberation Sans',sans-serif;">1</span>
<div class="b" style="left:905px;top:90.55px;width:73px;height:16.1px;background:#0000ff;"></div>
<span class="t" style="left:908px;top:93px;font:bold 12px/12px 'Liberation Sans',sans-serif;color:#fff;transform:scaleX(1.008);text-shadow:1px 0 0 #444,-1px 0 0 #444,0 1px 0 #444,0 -1px 0 #444,1px 1px 0 #555;">0.0000</span>
<div class="b" style="left:965.5px;top:92.05px;width:12px;height:12.5px;background:#f0f0f0;border:1px solid #777;border-width:2px 0 0 2px;border-color:#6a6a6a;"></div>
<span class="t" style="left:985.6px;top:91.65px;font:bold 12px/12px 'Liberation Sans',sans-serif;">2</span>
<div class="b" style="left:905px;top:106.6px;width:73px;height:16.1px;background:#ff0000;"></div>
<span class="t" style="left:908px;top:109.05px;font:bold 12px/12px 'Liberation Sans',sans-serif;color:#fff;transform:scaleX(1.008);text-shadow:1px 0 0 #444,-1px 0 0 #444,0 1px 0 #444,0 -1px 0 #444,1px 1px 0 #555;">0.0000</span>
<div class="b" style="left:965.5px;top:108.1px;width:12px;height:12.5px;background:#f0f0f0;border:1px solid #777;border-width:2px 0 0 2px;border-color:#6a6a6a;"></div>
<span class="t" style="left:985.6px;top:107.95px;font:bold 12px/12px 'Liberation Sans',sans-serif;">3</span>
<div class="b" style="left:905px;top:122.65px;width:73px;height:16.1px;background:#ff00ff;"></div>
<span class="t" style="left:908px;top:125.1px;font:bold 12px/12px 'Liberation Sans',sans-serif;color:#fff;transform:scaleX(1.008);text-shadow:1px 0 0 #444,-1px 0 0 #444,0 1px 0 #444,0 -1px 0 #444,1px 1px 0 #555;">0.0000</span>
<div class="b" style="left:965.5px;top:124.15px;width:12px;height:12.5px;background:#f0f0f0;border:1px solid #777;border-width:2px 0 0 2px;border-color:#6a6a6a;"></div>
<span class="t" style="left:985.6px;top:124.25px;font:bold 12px/12px 'Liberation Sans',sans-serif;">4</span>
<div class="b" style="left:905px;top:138.7px;width:73px;height:16.1px;background:#804000;"></div>
<span class="t" style="left:908px;top:141.15px;font:bold 12px/12px 'Liberation Sans',sans-serif;color:#fff;transform:scaleX(1.008);text-shadow:1px 0 0 #444,-1px 0 0 #444,0 1px 0 #444,0 -1px 0 #444,1px 1px 0 #555;">0.0000</span>
<div class="b" style="left:965.5px;top:140.2px;width:12px;height:12.5px;background:#f0f0f0;border:1px solid #777;border-width:2px 0 0 2px;border-color:#6a6a6a;"></div>
<span class="t" style="left:985.6px;top:140.55px;font:bold 12px/12px 'Liberation Sans',sans-serif;">5</span>
<div class="b" style="left:905px;top:154.75px;width:73px;height:16.1px;background:#8000c0;"></div>
<span class="t" style="left:908px;top:157.2px;font:bold 12px/12px 'Liberation Sans',sans-serif;color:#fff;transform:scaleX(1.008);text-shadow:1px 0 0 #444,-1px 0 0 #444,0 1px 0 #444,0 -1px 0 #444,1px 1px 0 #555;">0.0000</span>
<div class="b" style="left:965.5px;top:156.25px;width:12px;height:12.5px;background:#f0f0f0;border:1px solid #777;border-width:2px 0 0 2px;border-color:#6a6a6a;"></div>
<span class="t" style="left:985.6px;top:158.85px;font:bold 12px/12px 'Liberation Sans',sans-serif;">6</span>
<div class="b" style="left:896.3px;top:187px;width:133.2px;height:185.6px;border:1px solid #a6a6a6;box-shadow:1px 1px 0 #fff, inset 1px 1px 0 #fff;"></div>
<div class="b" style="left:904.2px;top:193.2px;width:100.6px;height:16.3px;background:#f0f0f0;border:1px solid #6d6d6d;box-shadow:inset -1px -1px 0 #c9c9c9;"></div>
<span class="t" style="left:910.5px;top:195.03px;font:13px/13px 'Liberation Sans',sans-serif;transform:scaleX(1.050);">Rays per color</span>
<div class="b" style="left:904.2px;top:214.2px;width:99.5px;height:18.3px;background:#bffcff;border:1px solid #777;border-width:2px 1px 1px 2px;border-color:#787878 #e6e6e6 #e6e6e6 #787878;"></div>
<span class="t" style="left:908.2px;top:218.02px;font:bold 12px/12px 'Liberation Sans',sans-serif;transform:scaleX(1.048);">558</span>
<div class="b" style="left:986.7px;top:216.2px;width:16px;height:15.3px;background:#f0f0f0;border:1px solid #fff;border-color:#fff #6e6e6e #6e6e6e #fff;border-width:1px 2px 2px 1px;"></div>
<svg class="b" style="left:986.7px;top:214.2px;" width="16" height="18.3" viewBox="986.7 214.2 16 18.3"><path d="M990.2 221.85 h7 l-3.5 4 z" fill="#000"/></svg>
<div class="b" style="left:904.2px;top:241.8px;width:100.6px;height:16.5px;background:#f0f0f0;border:1px solid #6d6d6d;box-shadow:inset -1px -1px 0 #c9c9c9;"></div>
<span class="t" style="left:922.75px;top:243.73px;font:13px/13px 'Liberation Sans',sans-serif;transform:scaleX(1.059);">BackColor</span>
<div class="b" style="left:904.2px;top:262.8px;width:99.5px;height:18px;background:#bffcff;border:1px solid #777;border-width:2px 1px 1px 2px;border-color:#787878 #e6e6e6 #e6e6e6 #787878;"></div>
<span class="t" style="left:908.2px;top:266.47px;font:italic bold 12px/12px 'Liberation Sans',sans-serif;transform:scaleX(0.979);">White</span>
<div class="b" style="left:986.7px;top:264.8px;width:16px;height:15px;background:#f0f0f0;border:1px solid #fff;border-color:#fff #6e6e6e #6e6e6e #fff;border-width:1px 2px 2px 1px;"></div>
<svg class="b" style="left:986.7px;top:262.8px;" width="16" height="18" viewBox="986.7 262.8 16 18"><path d="M990.2 270.3 h7 l-3.5 4 z" fill="#000"/></svg>
<div class="b" style="left:904px;top:293.8px;width:44.5px;height:16.3px;background:#f0f0f0;border:1px solid #6d6d6d;box-shadow:inset -1px -1px 0 #c9c9c9;"></div>
<span class="t" style="left:908.75px;top:296.12px;font:bold 12px/12px 'Liberation Sans',sans-serif;transform:scaleX(0.972);">ZOOM</span>
<div class="b" style="left:952.7px;top:293.8px;width:37.3px;height:16.3px;background:#bffcff;border:1px solid #777;border-width:2px 1px 1px 2px;border-color:#787878 #e6e6e6 #e6e6e6 #787878;"></div>
<span class="t" style="left:956.2px;top:296.13px;font:13px/13px 'Liberation Sans',sans-serif;">2</span>
<span class="t" style="left:917.2px;top:318.7px;font:13px/13px 'Liberation Sans',sans-serif;transform:scaleX(1.020);">Show Scale</span>
<div class="b" style="left:904.5px;top:334.6px;width:103.8px;height:19.4px;background:#fff;border:1px solid #777;border-width:2px 1px 1px 2px;border-color:#787878 #e6e6e6 #e6e6e6 #787878;"></div>
<span class="t" style="left:908.5px;top:338.97px;font:12px/12px 'Liberation Sans',sans-serif;transform:scaleX(0.877);">Airy Disk</span>
<div class="b" style="left:991.3px;top:336.6px;width:16px;height:16.4px;background:#f0f0f0;border:1px solid #fff;border-color:#fff #6e6e6e #6e6e6e #fff;border-width:1px 2px 2px 1px;"></div>
<svg class="b" style="left:991.3px;top:334.6px;" width="16" height="19.4" viewBox="991.3 334.6 16 19.4"><path d="M994.8 342.8 h7 l-3.5 4 z" fill="#000"/></svg>
<div class="b" style="left:896.3px;top:384px;width:133.4px;height:146.2px;border:1px solid #a6a6a6;box-shadow:1px 1px 0 #fff, inset 1px 1px 0 #fff;"></div>
<div class="b" style="left:901.1px;top:394.4px;width:51.6px;height:15.7px;background:#f0f0f0;border:1px solid #6d6d6d;box-shadow:inset -1px -1px 0 #c9c9c9;"></div>
<span class="t" style="left:906.2px;top:396.42px;font:12px/12px 'Liberation Sans',sans-serif;transform:scaleX(0.868);">Ref.  BFL</span>
<span class="t" style="left:956.6px;top:394.45px;font:12px/12px 'Liberation Sans',sans-serif;transform:scaleX(0.887);">186.108</span>
<div class="b" style="left:901.1px;top:418.3px;width:115.5px;height:15.8px;background:#f0f0f0;border:1px solid #6d6d6d;box-shadow:inset -1px -1px 0 #c9c9c9;"></div>
<span class="t" style="left:926.85px;top:420.37px;font:12px/12px 'Liberation Sans',sans-serif;transform:scaleX(0.905);">Actual  B.F.L.</span>
<div class="b" style="left:901.1px;top:435.2px;width:115.5px;height:16.3px;background:#fff;border:1px solid #777;border-width:2px 1px 1px 2px;border-color:#787878 #e6e6e6 #e6e6e6 #787878;"></div>
<span class="t" style="left:906.1px;top:438.02px;font:12px/12px 'Liberation Sans',sans-serif;transform:scaleX(0.895);">185.0711</span>
<div class="b" style="left:901.1px;top:458.6px;width:115.5px;height:15.5px;background:#f0f0f0;border:1px solid #6d6d6d;box-shadow:inset -1px -1px 0 #c9c9c9;"></div>
<span class="t" style="left:922.35px;top:460.52px;font:12px/12px 'Liberation Sans',sans-serif;transform:scaleX(0.885);">Field Curv.Rad.</span>
<div class="b" style="left:901.1px;top:475.5px;width:115.5px;height:16px;background:#fff;border:1px solid #777;border-width:2px 1px 1px 2px;border-color:#787878 #e6e6e6 #e6e6e6 #787878;"></div>
<span class="t" style="left:904.1px;top:478.17px;font:12px/12px 'Liberation Sans',sans-serif;">0</span>
<div class="b" style="left:901.1px;top:501.4px;width:71.3px;height:16.9px;background:#f0f0f0;border:1px solid #6d6d6d;box-shadow:inset -1px -1px 0 #c9c9c9;"></div>
<span class="t" style="left:908.25px;top:504.02px;font:12px/12px 'Liberation Sans',sans-serif;transform:scaleX(0.924);">Defocus +/-</span>
<div class="b" style="left:976.3px;top:501.4px;width:40.3px;height:18.3px;background:#fff;border:1px solid #777;border-width:2px 1px 1px 2px;border-color:#787878 #e6e6e6 #e6e6e6 #787878;"></div>
<span class="t" style="left:979.3px;top:505.22px;font:12px/12px 'Liberation Sans',sans-serif;transform:scaleX(0.899);">0.100</span>
<div class="b" style="left:1034.3px;top:56px;width:581px;height:406.8px;background:#fff;border:1px solid #5a5a5a;"></div>
<svg class="b" style="left:1035px;top:57px;" width="579" height="404" viewBox="1035 57 579 404"><path d="M1083 72.5h1M1073 77.5h1M1094 77.5h1M1083 78.5h1M1075 80.5h1M1091 80.5h1M1078 81.5h1M1089 81.5h1M1073 82.5h1M1075 82.5h1M1078 82.5h1M1080 82.5h2M1083 82.5h1M1086 82.5h3M1091 82.5h1M1093 82.5h1M1071 83.5h1M1081 83.5h1M1083 83.5h1M1085 83.5h1M1095 83.5h1M1073 85.5h1M1094 85.5h1M1069 86.5h1M1071 86.5h1M1073 86.5h1M1076 86.5h1M1091 86.5h1M1093 86.5h1M1095 86.5h1M1097 86.5h1M1070 87.5h1M1075 87.5h1M1078 87.5h1M1081 87.5h1M1083 87.5h1M1086 87.5h1M1088 87.5h1M1091 87.5h1M1096 87.5h1M1077 89.5h1M1079 89.5h1M1088 89.5h1M1090 89.5h1M1067 90.5h3M1073 90.5h1M1080 90.5h1M1082 90.5h2M1085 90.5h2M1094 90.5h1M1097 90.5h1M1099 90.5h2M1070 91.5h2M1095 91.5h2M1074 92.5h2M1092 92.5h1M1066 93.5h2M1076 93.5h1M1090 93.5h1M1100 93.5h1M1068 94.5h1M1070 94.5h1M1076 94.5h1M1078 94.5h2M1081 94.5h1M1085 94.5h1M1088 94.5h3M1096 94.5h1M1098 94.5h1M1070 95.5h1M1073 95.5h1M1079 95.5h2M1082 95.5h2M1085 95.5h3M1093 95.5h1M1096 95.5h1M1066 97.5h1M1073 97.5h1M1075 97.5h1M1092 97.5h1M1094 97.5h1M1100 97.5h1M1067 98.5h1M1074 98.5h1M1076 98.5h5M1082 98.5h2M1085 98.5h2M1088 98.5h3M1093 98.5h1M1099 98.5h1M1066 99.5h1M1070 99.5h1M1075 99.5h1M1091 99.5h1M1097 99.5h1M1100 99.5h1M1067 100.5h1M1074 100.5h2M1078 100.5h4M1083 100.5h1M1085 100.5h1M1087 100.5h3M1091 100.5h2M1099 100.5h1M1072 101.5h3M1076 101.5h3M1080 101.5h1M1087 101.5h1M1089 101.5h2M1092 101.5h3M1067 102.5h3M1076 102.5h1M1079 102.5h1M1081 102.5h1M1083 102.5h1M1085 102.5h1M1087 102.5h1M1091 102.5h1M1097 102.5h1M1099 102.5h1M1071 103.5h1M1075 103.5h1M1077 103.5h2M1088 103.5h2M1092 103.5h1M1096 103.5h1M1069 104.5h1M1072 104.5h1M1076 104.5h2M1079 104.5h1M1081 104.5h1M1083 104.5h1M1085 104.5h1M1087 104.5h1M1089 104.5h2M1095 104.5h1M1097 104.5h2M1071 105.5h1M1076 105.5h2M1089 105.5h2M1095 105.5h1M1069 106.5h2M1076 106.5h2M1081 106.5h1M1083 106.5h1M1086 106.5h1M1089 106.5h3M1096 106.5h2M1071 107.5h2M1074 107.5h1M1076 107.5h2M1079 107.5h4M1085 107.5h6M1092 107.5h1M1094 107.5h2M1071 108.5h2M1074 108.5h3M1078 108.5h1M1083 108.5h1M1088 108.5h1M1091 108.5h2M1095 108.5h1M1074 109.5h1M1076 109.5h3M1080 109.5h5M1086 109.5h1M1088 109.5h5M1073 110.5h4M1079 110.5h1M1082 110.5h3M1087 110.5h1M1090 110.5h4M1074 111.5h3M1078 111.5h1M1080 111.5h1M1082 111.5h1M1085 111.5h2M1088 111.5h6M1076 112.5h5M1083 112.5h1M1086 112.5h4M1091 112.5h1M1074 113.5h5M1080 113.5h2M1085 113.5h8M1078 114.5h2M1082 114.5h1M1084 114.5h1M1087 114.5h2M1075 115.5h1M1077 115.5h1M1079 115.5h1M1081 115.5h2M1084 115.5h4M1090 115.5h2M1074 116.5h3M1078 116.5h1M1080 116.5h1M1082 116.5h7M1090 116.5h1M1092 116.5h1M1076 117.5h2M1081 117.5h1M1083 117.5h3M1089 117.5h1M1091 117.5h1M1075 118.5h1M1078 118.5h1M1082 118.5h1M1084 118.5h2M1088 118.5h1M1092 118.5h1M1075 119.5h2M1078 119.5h1M1080 119.5h1M1082 119.5h7M1090 119.5h2M1076 120.5h1M1078 120.5h1M1082 120.5h2M1085 120.5h1M1089 120.5h1M1091 120.5h1M1076 121.5h1M1080 121.5h1M1082 121.5h3M1087 121.5h1M1091 121.5h1M1077 122.5h2M1080 122.5h5M1086 122.5h1M1088 122.5h1M1090 122.5h1M1076 123.5h1M1078 123.5h1M1081 123.5h1M1085 123.5h1M1088 123.5h1M1090 123.5h1M1077 124.5h3M1082 124.5h1M1084 124.5h1M1087 124.5h1M1089 124.5h1M1078 125.5h2M1081 125.5h1M1083 125.5h2M1086 125.5h1M1088 125.5h1M1079 126.5h1M1081 126.5h1M1085 126.5h1M1087 126.5h1M1080 127.5h7M1083 128.5h1M1203 72.5h1M1203 75.5h1M1193 77.5h1M1214 77.5h1M1195 78.5h1M1198 78.5h1M1200 78.5h1M1203 78.5h1M1206 78.5h1M1209 78.5h1M1212 78.5h1M1192 79.5h1M1196 79.5h1M1211 79.5h1M1214 79.5h1M1190 80.5h1M1216 80.5h1M1198 81.5h1M1209 81.5h1M1200 82.5h1M1202 82.5h1M1205 82.5h1M1207 82.5h1M1188 83.5h1M1190 83.5h1M1192 83.5h1M1203 83.5h1M1214 83.5h1M1217 83.5h1M1219 83.5h1M1193 84.5h1M1195 84.5h1M1198 84.5h1M1201 84.5h1M1206 84.5h1M1209 84.5h1M1212 84.5h1M1214 84.5h1M1203 85.5h1M1186 87.5h1M1190 87.5h1M1195 87.5h1M1211 87.5h1M1216 87.5h1M1221 87.5h1M1185 88.5h1M1188 88.5h1M1190 88.5h1M1197 88.5h1M1209 88.5h1M1216 88.5h1M1219 88.5h1M1222 88.5h1M1199 89.5h2M1206 89.5h1M1208 89.5h1M1193 90.5h1M1202 90.5h2M1205 90.5h1M1213 90.5h1M1184 91.5h2M1191 91.5h1M1196 91.5h1M1198 91.5h1M1208 91.5h1M1211 91.5h1M1216 91.5h1M1222 91.5h1M1187 92.5h1M1195 92.5h1M1201 92.5h1M1203 92.5h1M1206 92.5h1M1211 92.5h1M1220 92.5h1M1189 93.5h1M1197 93.5h1M1210 93.5h1M1217 93.5h1M1184 94.5h1M1191 94.5h1M1194 94.5h1M1198 94.5h3M1202 94.5h2M1205 94.5h3M1209 94.5h1M1213 94.5h1M1216 94.5h1M1222 94.5h1M1184 95.5h1M1192 95.5h1M1215 95.5h1M1222 95.5h1M1186 96.5h1M1195 96.5h1M1211 96.5h1M1221 96.5h1M1188 97.5h1M1194 97.5h1M1196 97.5h1M1202 97.5h2M1205 97.5h1M1210 97.5h1M1212 97.5h1M1218 97.5h1M1185 98.5h1M1197 98.5h4M1206 98.5h2M1209 98.5h2M1222 98.5h1M1186 99.5h1M1191 99.5h1M1195 99.5h1M1199 99.5h1M1207 99.5h1M1212 99.5h1M1216 99.5h1M1221 99.5h1M1186 100.5h1M1188 100.5h1M1196 100.5h1M1199 100.5h5M1205 100.5h1M1207 100.5h2M1211 100.5h1M1219 100.5h1M1221 100.5h1M1186 101.5h1M1195 101.5h4M1209 101.5h4M1221 101.5h1M1189 102.5h1M1194 102.5h1M1197 102.5h1M1200 102.5h2M1203 102.5h1M1205 102.5h1M1207 102.5h1M1210 102.5h1M1213 102.5h1M1218 102.5h1M1187 103.5h1M1191 103.5h1M1197 103.5h2M1208 103.5h3M1216 103.5h1M1219 103.5h2M1187 104.5h1M1189 104.5h1M1196 104.5h4M1201 104.5h1M1203 104.5h1M1205 104.5h1M1207 104.5h4M1217 104.5h1M1219 104.5h1M1188 105.5h1M1190 105.5h1M1193 105.5h1M1197 105.5h2M1208 105.5h3M1213 105.5h1M1217 105.5h2M1190 106.5h2M1196 106.5h3M1200 106.5h4M1205 106.5h3M1209 106.5h2M1216 106.5h2M1190 107.5h1M1192 107.5h1M1197 107.5h1M1199 107.5h3M1205 107.5h5M1214 107.5h1M1216 107.5h2M1193 108.5h2M1196 108.5h2M1199 108.5h1M1202 108.5h2M1205 108.5h1M1207 108.5h2M1210 108.5h4M1192 109.5h2M1196 109.5h3M1201 109.5h1M1203 109.5h4M1208 109.5h1M1210 109.5h1M1214 109.5h1M1192 110.5h1M1194 110.5h1M1196 110.5h6M1206 110.5h1M1208 110.5h1M1210 110.5h3M1214 110.5h2M1194 111.5h4M1199 111.5h1M1203 111.5h2M1208 111.5h1M1210 111.5h3M1195 112.5h2M1200 112.5h4M1205 112.5h1M1207 112.5h1M1210 112.5h3M1195 113.5h8M1204 113.5h8M1197 114.5h1M1199 114.5h2M1202 114.5h3M1207 114.5h1M1209 114.5h1M1196 115.5h1M1198 115.5h4M1203 115.5h1M1205 115.5h2M1208 115.5h2M1211 115.5h1M1195 116.5h2M1198 116.5h1M1201 116.5h4M1206 116.5h1M1208 116.5h1M1210 116.5h2M1196 117.5h1M1198 117.5h1M1201 117.5h2M1205 117.5h2M1208 117.5h1M1210 117.5h1M1196 118.5h1M1199 118.5h1M1201 118.5h1M1203 118.5h5M1211 118.5h1M1196 119.5h3M1201 119.5h1M1203 119.5h2M1206 119.5h1M1208 119.5h4M1196 120.5h1M1199 120.5h1M1201 120.5h1M1203 120.5h2M1206 120.5h1M1208 120.5h1M1210 120.5h1M1196 121.5h1M1203 121.5h2M1210 121.5h1M1197 122.5h1M1199 122.5h1M1201 122.5h3M1205 122.5h2M1208 122.5h3M1197 123.5h1M1203 123.5h2M1209 123.5h1M1198 124.5h4M1203 124.5h3M1207 124.5h3M1199 125.5h5M1205 125.5h4M1200 126.5h5M1206 126.5h2M1201 127.5h3M1205 127.5h1M1324 71.5h1M1312 75.5h1M1315 75.5h1M1318 75.5h1M1321 75.5h1M1324 75.5h1M1327 75.5h1M1330 75.5h1M1333 75.5h1M1336 75.5h1M1310 76.5h1M1314 76.5h1M1335 76.5h1M1338 76.5h1M1317 78.5h1M1332 78.5h1M1308 80.5h1M1310 80.5h1M1312 80.5h1M1319 80.5h1M1330 80.5h1M1336 80.5h1M1339 80.5h1M1341 80.5h1M1315 81.5h1M1318 81.5h1M1321 81.5h1M1328 81.5h1M1330 81.5h1M1333 81.5h1M1321 82.5h1M1323 82.5h2M1326 82.5h2M1314 84.5h1M1334 84.5h1M1304 85.5h1M1306 85.5h1M1308 85.5h1M1341 85.5h1M1343 85.5h2M1310 86.5h1M1312 86.5h1M1316 86.5h1M1332 86.5h1M1337 86.5h2M1313 87.5h1M1318 87.5h1M1330 87.5h1M1335 87.5h1M1316 88.5h1M1320 88.5h1M1329 88.5h1M1332 88.5h1M1303 89.5h2M1315 89.5h1M1319 89.5h1M1321 89.5h1M1323 89.5h2M1326 89.5h2M1330 89.5h1M1334 89.5h1M1344 89.5h2M1306 90.5h1M1312 90.5h1M1322 90.5h1M1324 90.5h1M1327 90.5h1M1336 90.5h1M1342 90.5h1M1309 91.5h1M1340 91.5h1M1303 92.5h1M1316 92.5h1M1332 92.5h1M1345 92.5h1M1304 93.5h1M1312 93.5h2M1318 93.5h1M1331 93.5h1M1336 93.5h2M1345 93.5h1M1305 94.5h1M1315 94.5h1M1319 94.5h2M1322 94.5h3M1326 94.5h3M1330 94.5h1M1334 94.5h1M1343 94.5h1M1308 95.5h1M1341 95.5h1M1304 96.5h1M1317 96.5h1M1331 96.5h2M1345 96.5h1M1305 97.5h1M1316 97.5h1M1318 97.5h1M1320 97.5h1M1323 97.5h2M1326 97.5h1M1329 97.5h1M1331 97.5h1M1333 97.5h1M1344 97.5h1M1305 98.5h1M1311 98.5h1M1319 98.5h4M1324 98.5h1M1327 98.5h4M1338 98.5h1M1344 98.5h1M1305 99.5h1M1307 99.5h1M1317 99.5h1M1331 99.5h2M1341 99.5h1M1344 99.5h1M1307 100.5h1M1314 100.5h1M1317 100.5h2M1320 100.5h2M1323 100.5h2M1326 100.5h2M1329 100.5h1M1331 100.5h2M1335 100.5h1M1341 100.5h1M1306 101.5h2M1310 101.5h1M1318 101.5h2M1329 101.5h2M1338 101.5h1M1342 101.5h2M1308 102.5h1M1316 102.5h1M1318 102.5h1M1321 102.5h2M1324 102.5h1M1326 102.5h1M1328 102.5h1M1330 102.5h1M1332 102.5h1M1340 102.5h1M1307 103.5h1M1319 103.5h3M1328 103.5h3M1342 103.5h1M1307 104.5h1M1310 104.5h1M1313 104.5h1M1318 104.5h3M1322 104.5h1M1324 104.5h1M1326 104.5h1M1328 104.5h1M1330 104.5h1M1335 104.5h1M1339 104.5h1M1341 104.5h1M1309 105.5h1M1318 105.5h4M1328 105.5h4M1340 105.5h1M1309 106.5h1M1312 106.5h2M1316 106.5h1M1318 106.5h2M1322 106.5h3M1326 106.5h2M1329 106.5h1M1331 106.5h1M1333 106.5h1M1336 106.5h2M1339 106.5h2M1314 107.5h1M1318 107.5h8M1327 107.5h1M1329 107.5h2M1335 107.5h1M1312 108.5h1M1316 108.5h4M1321 108.5h1M1323 108.5h1M1326 108.5h2M1330 108.5h2M1333 108.5h1M1336 108.5h2M1311 109.5h2M1316 109.5h1M1318 109.5h3M1323 109.5h3M1329 109.5h3M1333 109.5h1M1337 109.5h1M1314 110.5h1M1316 110.5h3M1320 110.5h4M1325 110.5h9M1335 110.5h1M1314 111.5h4M1319 111.5h3M1328 111.5h1M1330 111.5h6M1316 112.5h1M1318 112.5h3M1322 112.5h2M1325 112.5h1M1327 112.5h1M1329 112.5h2M1333 112.5h1M1317 113.5h9M1327 113.5h6M1318 114.5h2M1321 114.5h3M1326 114.5h6M1318 115.5h3M1323 115.5h1M1326 115.5h1M1328 115.5h2M1331 115.5h1M1317 116.5h8M1326 116.5h4M1331 116.5h2M1318 117.5h1M1321 117.5h1M1327 117.5h1M1330 117.5h1M1317 118.5h1M1321 118.5h1M1323 118.5h5M1331 118.5h1M1317 119.5h4M1322 119.5h6M1329 119.5h1M1331 119.5h1M1318 120.5h1M1321 120.5h2M1326 120.5h1M1328 120.5h1M1331 120.5h1M1318 121.5h2M1323 121.5h4M1329 121.5h1M1331 121.5h1M1318 122.5h1M1320 122.5h3M1324 122.5h2M1327 122.5h4M1319 123.5h2M1322 123.5h6M1329 123.5h2M1319 124.5h2M1328 124.5h2M1320 125.5h5M1326 125.5h3M1321 126.5h7M1323 127.5h2M1326 127.5h1M1445 68.5h1M1445 70.5h1M1432 72.5h1M1435 72.5h1M1439 72.5h1M1442 72.5h1M1445 72.5h1M1449 72.5h1M1452 72.5h1M1455 72.5h1M1458 72.5h1M1430 73.5h1M1461 73.5h1M1435 75.5h1M1455 75.5h1M1427 77.5h1M1429 77.5h1M1461 77.5h1M1463 77.5h1M1432 78.5h1M1436 78.5h1M1438 78.5h1M1453 78.5h1M1455 78.5h1M1458 78.5h1M1439 79.5h2M1442 79.5h1M1445 79.5h1M1448 79.5h1M1451 79.5h2M1442 80.5h1M1449 80.5h1M1443 81.5h1M1445 81.5h1M1447 81.5h1M1423 82.5h1M1425 82.5h1M1427 82.5h1M1463 82.5h1M1466 82.5h2M1430 83.5h1M1435 83.5h1M1455 83.5h1M1460 83.5h1M1433 85.5h1M1438 85.5h1M1453 85.5h1M1457 85.5h1M1422 86.5h2M1433 86.5h1M1436 86.5h1M1454 86.5h1M1457 86.5h1M1467 86.5h2M1426 87.5h1M1439 87.5h1M1442 87.5h1M1445 87.5h1M1448 87.5h1M1451 87.5h1M1465 87.5h1M1441 88.5h1M1450 88.5h1M1429 89.5h1M1436 89.5h1M1442 89.5h1M1444 89.5h2M1447 89.5h2M1455 89.5h1M1462 89.5h1M1422 90.5h2M1434 90.5h1M1457 90.5h1M1468 90.5h1M1432 91.5h1M1438 91.5h1M1453 91.5h1M1459 91.5h1M1425 92.5h1M1435 92.5h1M1456 92.5h1M1466 92.5h1M1434 93.5h1M1436 93.5h1M1439 93.5h2M1450 93.5h2M1454 93.5h1M1456 93.5h1M1423 94.5h1M1427 94.5h1M1438 94.5h1M1441 94.5h1M1443 94.5h3M1447 94.5h3M1453 94.5h1M1463 94.5h1M1468 94.5h1M1424 95.5h1M1440 95.5h1M1450 95.5h1M1467 95.5h1M1430 96.5h1M1438 96.5h1M1443 96.5h1M1445 96.5h1M1448 96.5h1M1452 96.5h1M1460 96.5h1M1424 97.5h1M1426 97.5h1M1437 97.5h1M1439 97.5h2M1442 97.5h1M1444 97.5h2M1447 97.5h2M1451 97.5h1M1453 97.5h1M1464 97.5h1M1467 97.5h1M1424 98.5h1M1434 98.5h1M1440 98.5h2M1449 98.5h2M1457 98.5h1M1467 98.5h1M1426 99.5h1M1438 99.5h2M1452 99.5h1M1464 99.5h1M1425 100.5h2M1430 100.5h1M1437 100.5h1M1439 100.5h1M1441 100.5h2M1444 100.5h2M1447 100.5h3M1451 100.5h2M1454 100.5h1M1461 100.5h1M1465 100.5h2M1427 101.5h1M1440 101.5h1M1450 101.5h2M1463 101.5h1M1426 102.5h1M1429 102.5h1M1433 102.5h1M1439 102.5h1M1442 102.5h2M1445 102.5h1M1447 102.5h1M1449 102.5h1M1451 102.5h1M1457 102.5h1M1461 102.5h1M1465 102.5h1M1426 103.5h1M1429 103.5h1M1440 103.5h2M1443 103.5h1M1448 103.5h4M1462 103.5h1M1464 103.5h1M1428 104.5h1M1440 104.5h1M1442 104.5h2M1445 104.5h1M1447 104.5h2M1450 104.5h2M1462 104.5h1M1428 105.5h1M1431 105.5h2M1436 105.5h1M1438 105.5h1M1440 105.5h1M1442 105.5h1M1444 105.5h3M1449 105.5h2M1452 105.5h1M1454 105.5h1M1458 105.5h1M1460 105.5h1M1462 105.5h1M1439 106.5h1M1441 106.5h1M1443 106.5h1M1445 106.5h1M1447 106.5h1M1449 106.5h1M1451 106.5h1M1431 107.5h3M1435 107.5h1M1438 107.5h4M1443 107.5h1M1445 107.5h1M1447 107.5h1M1449 107.5h4M1455 107.5h1M1458 107.5h3M1431 108.5h1M1436 108.5h1M1439 108.5h1M1442 108.5h2M1447 108.5h2M1452 108.5h1M1455 108.5h1M1459 108.5h2M1433 109.5h1M1439 109.5h4M1445 109.5h1M1449 109.5h3M1457 109.5h1M1433 110.5h4M1438 110.5h2M1441 110.5h1M1443 110.5h6M1450 110.5h2M1453 110.5h1M1455 110.5h3M1435 111.5h1M1438 111.5h3M1442 111.5h2M1448 111.5h5M1455 111.5h1M1436 112.5h1M1438 112.5h1M1440 112.5h1M1444 112.5h3M1451 112.5h1M1453 112.5h2M1437 113.5h3M1441 113.5h1M1443 113.5h4M1448 113.5h1M1450 113.5h4M1439 114.5h1M1441 114.5h1M1443 114.5h2M1447 114.5h2M1450 114.5h1M1452 114.5h1M1439 115.5h3M1443 115.5h1M1445 115.5h2M1448 115.5h4M1438 116.5h2M1441 116.5h6M1448 116.5h5M1440 117.5h1M1443 117.5h2M1447 117.5h1M1451 117.5h1M1439 118.5h1M1443 118.5h5M1452 118.5h1M1439 119.5h1M1441 119.5h4M1446 119.5h7M1440 120.5h1M1444 120.5h3M1451 120.5h1M1439 121.5h1M1441 121.5h2M1444 121.5h3M1448 121.5h1M1450 121.5h2M1440 122.5h2M1443 122.5h1M1445 122.5h1M1447 122.5h1M1449 122.5h3M1441 123.5h4M1446 123.5h2M1449 123.5h2M1442 124.5h3M1446 124.5h1M1448 124.5h2M1442 125.5h2M1445 125.5h4M1444 126.5h4M1566 64.5h1M1552 69.5h1M1555 69.5h1M1558 69.5h1M1562 69.5h1M1566 69.5h1M1569 69.5h1M1573 69.5h1M1576 69.5h1M1579 69.5h1M1549 70.5h1M1582 70.5h1M1546 74.5h1M1549 74.5h1M1556 74.5h1M1576 74.5h1M1582 74.5h1M1585 74.5h1M1552 75.5h1M1555 75.5h1M1576 75.5h1M1579 75.5h1M1559 76.5h1M1562 76.5h1M1566 76.5h1M1569 76.5h1M1573 76.5h1M1558 77.5h1M1573 77.5h1M1542 79.5h1M1544 79.5h1M1560 79.5h1M1571 79.5h1M1588 79.5h2M1546 80.5h1M1562 80.5h1M1564 80.5h1M1567 80.5h1M1569 80.5h1M1585 80.5h1M1549 81.5h1M1566 81.5h1M1582 81.5h1M1553 82.5h1M1556 82.5h1M1575 82.5h1M1578 82.5h1M1556 83.5h1M1575 83.5h1M1541 84.5h2M1559 84.5h1M1572 84.5h1M1589 84.5h2M1545 85.5h1M1554 85.5h1M1558 85.5h1M1562 85.5h1M1566 85.5h1M1569 85.5h1M1573 85.5h1M1577 85.5h1M1587 85.5h1M1560 86.5h1M1571 86.5h1M1548 87.5h1M1561 87.5h1M1570 87.5h1M1584 87.5h1M1541 88.5h1M1557 88.5h1M1563 88.5h2M1566 88.5h3M1575 88.5h1M1590 88.5h2M1551 89.5h1M1555 89.5h1M1577 89.5h1M1580 89.5h1M1543 90.5h1M1554 90.5h1M1577 90.5h1M1588 90.5h1M1558 91.5h1M1573 91.5h1M1541 92.5h1M1546 92.5h1M1555 92.5h1M1557 92.5h1M1560 92.5h1M1572 92.5h1M1574 92.5h1M1576 92.5h1M1585 92.5h1M1590 92.5h1M1542 93.5h1M1557 93.5h1M1560 93.5h3M1569 93.5h3M1574 93.5h1M1589 93.5h1M1550 94.5h1M1563 94.5h2M1566 94.5h3M1582 94.5h1M1542 95.5h1M1545 95.5h1M1559 95.5h1M1572 95.5h1M1586 95.5h1M1589 95.5h1M1542 96.5h1M1553 96.5h1M1558 96.5h1M1573 96.5h1M1578 96.5h1M1589 96.5h1M1544 97.5h1M1560 97.5h5M1566 97.5h7M1587 97.5h1M1543 98.5h1M1545 98.5h1M1549 98.5h1M1556 98.5h1M1559 98.5h1M1572 98.5h1M1575 98.5h1M1583 98.5h1M1587 98.5h2M1560 99.5h1M1571 99.5h2M1544 100.5h2M1559 100.5h2M1562 100.5h3M1566 100.5h3M1570 100.5h3M1586 100.5h2M1548 101.5h1M1552 101.5h1M1560 101.5h2M1570 101.5h2M1579 101.5h1M1583 101.5h1M1545 102.5h1M1547 102.5h1M1561 102.5h2M1564 102.5h1M1566 102.5h2M1569 102.5h2M1584 102.5h1M1586 102.5h1M1547 103.5h1M1555 103.5h1M1561 103.5h2M1564 103.5h1M1566 103.5h6M1576 103.5h1M1584 103.5h1M1547 104.5h1M1549 104.5h1M1551 104.5h1M1557 104.5h1M1560 104.5h2M1564 104.5h1M1566 104.5h2M1570 104.5h2M1574 104.5h1M1580 104.5h1M1582 104.5h1M1584 104.5h1M1561 105.5h3M1568 105.5h3M1551 106.5h2M1558 106.5h1M1560 106.5h3M1564 106.5h4M1569 106.5h3M1573 106.5h1M1580 106.5h1M1549 107.5h2M1554 107.5h2M1557 107.5h1M1562 107.5h1M1564 107.5h1M1566 107.5h1M1568 107.5h2M1574 107.5h1M1576 107.5h2M1581 107.5h2M1552 108.5h1M1560 108.5h3M1564 108.5h1M1567 108.5h1M1569 108.5h1M1571 108.5h2M1579 108.5h1M1552 109.5h1M1554 109.5h1M1557 109.5h5M1563 109.5h1M1568 109.5h7M1577 109.5h1M1579 109.5h1M1553 110.5h2M1560 110.5h2M1563 110.5h9M1578 110.5h1M1554 111.5h1M1557 111.5h1M1559 111.5h3M1563 111.5h1M1565 111.5h4M1570 111.5h3M1574 111.5h1M1577 111.5h1M1555 112.5h1M1557 112.5h3M1561 112.5h1M1564 112.5h1M1567 112.5h1M1571 112.5h6M1558 113.5h6M1566 113.5h1M1568 113.5h6M1559 114.5h4M1565 114.5h2M1569 114.5h1M1571 114.5h2M1560 115.5h4M1565 115.5h2M1568 115.5h4M1559 116.5h3M1563 116.5h6M1570 116.5h3M1561 117.5h1M1563 117.5h1M1565 117.5h4M1570 117.5h1M1560 118.5h1M1563 118.5h1M1568 118.5h1M1571 118.5h1M1559 119.5h4M1564 119.5h1M1566 119.5h7M1561 120.5h1M1563 120.5h1M1565 120.5h2M1568 120.5h1M1571 120.5h1M1560 121.5h1M1562 121.5h1M1564 121.5h3M1568 121.5h2M1571 121.5h1M1561 122.5h2M1564 122.5h8M1561 123.5h1M1563 123.5h1M1565 123.5h2M1569 123.5h2M1562 124.5h1M1564 124.5h4M1569 124.5h1M1563 125.5h2M1566 125.5h3M1564 126.5h4M1083 184.5h1M1076 187.5h1M1090 187.5h1M1078 189.5h1M1088 189.5h1M1080 190.5h2M1083 190.5h1M1085 190.5h1M1087 190.5h1M1077 191.5h2M1081 191.5h1M1086 191.5h1M1088 191.5h1M1090 191.5h1M1076 192.5h1M1082 192.5h3M1090 192.5h1M1075 193.5h4M1088 193.5h1M1090 193.5h2M1074 194.5h1M1078 194.5h1M1080 194.5h1M1082 194.5h2M1085 194.5h1M1087 194.5h2M1092 194.5h1M1073 196.5h3M1077 196.5h1M1079 196.5h2M1086 196.5h2M1090 196.5h2M1093 196.5h1M1073 197.5h2M1077 197.5h1M1081 197.5h5M1089 197.5h1M1092 197.5h2M1072 198.5h3M1078 198.5h3M1086 198.5h1M1088 198.5h1M1092 198.5h3M1072 199.5h1M1075 199.5h1M1077 199.5h1M1079 199.5h9M1090 199.5h1M1092 199.5h1M1094 199.5h1M1072 200.5h1M1082 200.5h3M1095 200.5h1M1073 201.5h1M1076 201.5h8M1085 201.5h6M1094 201.5h1M1072 202.5h1M1074 202.5h1M1078 202.5h4M1083 202.5h1M1085 202.5h4M1092 202.5h1M1094 202.5h1M1072 203.5h1M1076 203.5h6M1083 203.5h1M1085 203.5h1M1087 203.5h4M1094 203.5h1M1072 204.5h3M1077 204.5h3M1081 204.5h1M1085 204.5h1M1087 204.5h3M1093 204.5h2M1073 205.5h2M1076 205.5h4M1081 205.5h4M1086 205.5h6M1093 205.5h1M1073 206.5h1M1076 206.5h5M1087 206.5h5M1093 206.5h1M1074 207.5h10M1085 207.5h4M1090 207.5h3M1075 208.5h7M1083 208.5h10M1075 209.5h9M1085 209.5h3M1089 209.5h4M1075 210.5h1M1077 210.5h15M1075 211.5h2M1078 211.5h11M1090 211.5h1M1092 211.5h1M1075 212.5h1M1077 212.5h1M1079 212.5h10M1090 212.5h3M1075 213.5h1M1077 213.5h1M1079 213.5h2M1082 213.5h1M1084 213.5h4M1089 213.5h1M1091 213.5h1M1075 214.5h2M1078 214.5h1M1080 214.5h7M1088 214.5h3M1092 214.5h1M1076 215.5h1M1079 215.5h2M1082 215.5h3M1086 215.5h1M1088 215.5h1M1091 215.5h1M1075 216.5h1M1077 216.5h1M1082 216.5h4M1090 216.5h2M1076 217.5h1M1078 217.5h1M1080 217.5h1M1083 217.5h2M1086 217.5h3M1090 217.5h2M1076 218.5h2M1080 218.5h3M1084 218.5h3M1089 218.5h1M1091 218.5h1M1077 219.5h2M1083 219.5h2M1088 219.5h1M1090 219.5h1M1077 220.5h2M1080 220.5h2M1083 220.5h1M1085 220.5h4M1090 220.5h1M1077 221.5h1M1079 221.5h3M1085 221.5h1M1087 221.5h1M1089 221.5h1M1078 222.5h1M1080 222.5h9M1081 223.5h3M1085 223.5h1M1203 183.5h1M1196 186.5h1M1203 186.5h1M1210 186.5h1M1199 187.5h1M1201 187.5h1M1203 187.5h1M1205 187.5h1M1207 187.5h1M1196 188.5h1M1198 188.5h1M1208 188.5h2M1211 188.5h1M1195 189.5h1M1212 189.5h1M1194 190.5h1M1196 190.5h1M1200 190.5h1M1207 190.5h1M1211 190.5h2M1193 191.5h1M1198 191.5h2M1201 191.5h7M1209 191.5h1M1214 191.5h1M1197 192.5h1M1210 192.5h1M1192 193.5h2M1195 193.5h1M1212 193.5h1M1214 193.5h2M1191 194.5h1M1194 194.5h1M1198 194.5h1M1208 194.5h1M1212 194.5h1M1215 194.5h1M1196 195.5h1M1198 195.5h2M1207 195.5h2M1210 195.5h1M1191 196.5h2M1195 196.5h1M1197 196.5h1M1200 196.5h8M1210 196.5h1M1212 196.5h1M1215 196.5h2M1194 197.5h1M1202 197.5h2M1205 197.5h1M1213 197.5h1M1190 198.5h1M1195 198.5h1M1198 198.5h1M1208 198.5h1M1211 198.5h2M1216 198.5h1M1191 199.5h1M1197 199.5h1M1199 199.5h9M1209 199.5h1M1215 199.5h2M1190 200.5h1M1193 200.5h1M1197 200.5h1M1201 200.5h5M1209 200.5h1M1214 200.5h1M1216 200.5h1M1191 201.5h1M1198 201.5h6M1205 201.5h5M1216 201.5h1M1191 202.5h2M1195 202.5h1M1197 202.5h5M1203 202.5h1M1205 202.5h3M1209 202.5h2M1212 202.5h1M1214 202.5h3M1197 203.5h4M1202 203.5h2M1205 203.5h1M1207 203.5h4M1192 204.5h1M1194 204.5h2M1198 204.5h2M1201 204.5h1M1203 204.5h1M1205 204.5h1M1207 204.5h3M1212 204.5h1M1214 204.5h2M1192 205.5h3M1197 205.5h5M1206 205.5h5M1212 205.5h4M1194 206.5h2M1197 206.5h3M1201 206.5h6M1208 206.5h3M1212 206.5h2M1194 207.5h1M1196 207.5h2M1199 207.5h2M1202 207.5h10M1213 207.5h1M1195 208.5h14M1210 208.5h2M1196 209.5h12M1209 209.5h3M1195 210.5h17M1195 211.5h2M1198 211.5h7M1206 211.5h3M1210 211.5h2M1195 212.5h2M1198 212.5h1M1200 212.5h7M1209 212.5h1M1211 212.5h1M1196 213.5h1M1198 213.5h1M1201 213.5h6M1209 213.5h1M1211 213.5h1M1195 214.5h2M1198 214.5h1M1201 214.5h1M1203 214.5h2M1206 214.5h1M1208 214.5h1M1210 214.5h2M1197 215.5h1M1200 215.5h2M1203 215.5h3M1207 215.5h1M1210 215.5h1M1196 216.5h1M1198 216.5h1M1201 216.5h1M1203 216.5h1M1206 216.5h1M1209 216.5h1M1211 216.5h1M1196 217.5h4M1201 217.5h6M1208 217.5h1M1210 217.5h1M1196 218.5h1M1198 218.5h2M1203 218.5h2M1207 218.5h1M1209 218.5h2M1197 219.5h1M1199 219.5h2M1202 219.5h1M1205 219.5h2M1208 219.5h2M1198 220.5h2M1201 220.5h3M1205 220.5h2M1208 220.5h2M1199 221.5h2M1202 221.5h3M1206 221.5h3M1200 222.5h4M1205 222.5h3M1202 223.5h2M1205 223.5h1M1324 182.5h1M1324 183.5h1M1318 184.5h1M1320 184.5h1M1322 184.5h1M1324 184.5h1M1326 184.5h1M1329 184.5h1M1331 184.5h1M1316 185.5h1M1332 185.5h1M1315 186.5h1M1317 186.5h1M1331 186.5h1M1334 186.5h1M1313 188.5h2M1316 188.5h1M1318 188.5h3M1322 188.5h1M1326 188.5h1M1329 188.5h1M1331 188.5h1M1333 188.5h2M1336 188.5h1M1321 189.5h1M1324 189.5h1M1328 189.5h1M1322 190.5h1M1327 190.5h1M1311 191.5h1M1313 191.5h2M1323 191.5h3M1334 191.5h1M1336 191.5h2M1311 192.5h1M1316 192.5h1M1318 192.5h1M1331 192.5h2M1338 192.5h1M1316 193.5h1M1319 193.5h1M1330 193.5h1M1333 193.5h1M1310 194.5h2M1319 194.5h1M1321 194.5h2M1324 194.5h1M1326 194.5h1M1328 194.5h2M1337 194.5h2M1313 195.5h1M1321 195.5h2M1327 195.5h2M1335 195.5h1M1310 196.5h1M1316 196.5h1M1318 196.5h1M1322 196.5h5M1330 196.5h1M1332 196.5h2M1339 196.5h1M1310 197.5h2M1320 197.5h1M1329 197.5h1M1338 197.5h1M1313 198.5h1M1316 198.5h1M1318 198.5h1M1320 198.5h1M1328 198.5h1M1331 198.5h2M1336 198.5h1M1310 199.5h1M1319 199.5h9M1329 199.5h2M1338 199.5h2M1315 200.5h1M1320 200.5h8M1329 200.5h1M1334 200.5h1M1310 201.5h3M1319 201.5h6M1326 201.5h4M1337 201.5h2M1311 202.5h4M1317 202.5h1M1319 202.5h3M1323 202.5h2M1326 202.5h6M1334 202.5h2M1337 202.5h2M1311 203.5h1M1319 203.5h3M1328 203.5h2M1337 203.5h1M1312 204.5h3M1319 204.5h4M1324 204.5h1M1326 204.5h1M1328 204.5h3M1335 204.5h1M1337 204.5h1M1313 205.5h2M1317 205.5h1M1319 205.5h4M1326 205.5h3M1330 205.5h1M1332 205.5h1M1335 205.5h1M1313 206.5h1M1315 206.5h1M1317 206.5h6M1324 206.5h4M1329 206.5h2M1332 206.5h1M1334 206.5h3M1315 207.5h2M1318 207.5h8M1327 207.5h6M1334 207.5h1M1315 208.5h3M1320 208.5h8M1329 208.5h1M1331 208.5h4M1317 209.5h5M1323 209.5h1M1325 209.5h8M1317 210.5h6M1324 210.5h9M1318 211.5h2M1321 211.5h2M1324 211.5h2M1327 211.5h1M1329 211.5h1M1331 211.5h1M1317 212.5h1M1319 212.5h1M1321 212.5h3M1325 212.5h5M1331 212.5h2M1318 213.5h1M1320 213.5h1M1323 213.5h4M1329 213.5h1M1331 213.5h1M1317 214.5h13M1331 214.5h2M1317 215.5h2M1324 215.5h2M1330 215.5h2M1317 216.5h1M1319 216.5h1M1321 216.5h1M1323 216.5h4M1328 216.5h2M1331 216.5h1M1318 217.5h1M1320 217.5h1M1322 217.5h3M1326 217.5h2M1329 217.5h3M1318 218.5h2M1321 218.5h3M1325 218.5h1M1327 218.5h3M1331 218.5h1M1319 219.5h2M1323 219.5h1M1325 219.5h1M1328 219.5h3M1319 220.5h1M1322 220.5h1M1324 220.5h2M1327 220.5h1M1329 220.5h1M1320 221.5h3M1326 221.5h1M1328 221.5h1M1321 222.5h1M1323 222.5h5M1445 179.5h1M1438 181.5h1M1440 181.5h1M1443 181.5h1M1445 181.5h1M1448 181.5h1M1450 181.5h1M1452 181.5h1M1436 182.5h1M1454 182.5h1M1435 183.5h1M1456 183.5h1M1432 185.5h1M1434 185.5h1M1436 185.5h1M1438 185.5h1M1452 185.5h1M1454 185.5h1M1456 185.5h1M1458 185.5h1M1441 186.5h1M1443 186.5h1M1445 186.5h1M1448 186.5h1M1450 186.5h1M1440 187.5h1M1450 187.5h1M1431 188.5h2M1458 188.5h1M1460 188.5h1M1430 189.5h1M1434 189.5h1M1442 189.5h1M1449 189.5h1M1456 189.5h1M1460 189.5h1M1437 190.5h1M1443 190.5h5M1454 190.5h1M1430 191.5h1M1439 191.5h1M1441 191.5h1M1449 191.5h1M1452 191.5h1M1461 191.5h1M1429 192.5h1M1431 192.5h1M1437 192.5h1M1443 192.5h1M1445 192.5h1M1447 192.5h1M1453 192.5h1M1459 192.5h1M1461 192.5h1M1433 193.5h1M1440 193.5h1M1450 193.5h1M1457 193.5h1M1429 194.5h1M1435 194.5h1M1442 194.5h1M1449 194.5h1M1455 194.5h1M1461 194.5h1M1429 195.5h2M1438 195.5h2M1443 195.5h1M1447 195.5h2M1451 195.5h1M1453 195.5h1M1460 195.5h2M1432 196.5h1M1438 196.5h1M1444 196.5h3M1453 196.5h1M1458 196.5h1M1429 197.5h2M1438 197.5h1M1440 197.5h2M1450 197.5h2M1453 197.5h1M1461 197.5h1M1435 198.5h1M1440 198.5h3M1449 198.5h1M1451 198.5h1M1456 198.5h1M1430 199.5h1M1432 199.5h1M1442 199.5h7M1459 199.5h1M1461 199.5h1M1437 200.5h1M1440 200.5h2M1443 200.5h5M1449 200.5h2M1453 200.5h1M1430 201.5h3M1434 201.5h1M1442 201.5h8M1456 201.5h1M1458 201.5h3M1431 202.5h2M1439 202.5h1M1441 202.5h2M1444 202.5h2M1447 202.5h5M1458 202.5h1M1460 202.5h1M1431 203.5h1M1434 203.5h1M1437 203.5h1M1441 203.5h3M1447 203.5h3M1454 203.5h1M1457 203.5h1M1459 203.5h1M1433 204.5h1M1440 204.5h11M1457 204.5h1M1432 205.5h3M1436 205.5h1M1439 205.5h6M1446 205.5h6M1454 205.5h1M1456 205.5h1M1458 205.5h1M1436 206.5h1M1439 206.5h1M1441 206.5h1M1443 206.5h3M1447 206.5h1M1449 206.5h3M1455 206.5h1M1434 207.5h2M1437 207.5h1M1439 207.5h8M1448 207.5h6M1455 207.5h2M1436 208.5h2M1439 208.5h1M1441 208.5h10M1452 208.5h4M1437 209.5h5M1443 209.5h1M1445 209.5h9M1438 210.5h2M1441 210.5h5M1447 210.5h6M1440 211.5h11M1438 212.5h2M1441 212.5h5M1447 212.5h2M1450 212.5h3M1439 213.5h1M1441 213.5h1M1444 213.5h4M1449 213.5h1M1451 213.5h1M1438 214.5h2M1441 214.5h8M1450 214.5h3M1439 215.5h3M1444 215.5h3M1449 215.5h1M1451 215.5h2M1438 216.5h1M1442 216.5h1M1445 216.5h2M1448 216.5h1M1452 216.5h1M1439 217.5h3M1443 217.5h1M1445 217.5h2M1448 217.5h4M1439 218.5h1M1443 218.5h2M1446 218.5h2M1451 218.5h1M1440 219.5h4M1445 219.5h3M1449 219.5h3M1441 220.5h3M1445 220.5h1M1447 220.5h1M1449 220.5h2M1442 221.5h8M1444 222.5h2M1447 222.5h1M1566 176.5h1M1558 178.5h1M1560 178.5h1M1563 178.5h1M1566 178.5h1M1568 178.5h1M1571 178.5h1M1573 178.5h1M1556 179.5h1M1575 179.5h1M1554 180.5h1M1577 180.5h1M1566 181.5h1M1552 182.5h2M1556 182.5h1M1558 182.5h1M1573 182.5h1M1576 182.5h1M1578 182.5h1M1580 182.5h1M1561 183.5h1M1563 183.5h1M1566 183.5h1M1568 183.5h1M1571 183.5h1M1559 184.5h1M1573 184.5h1M1549 186.5h2M1552 186.5h1M1580 186.5h3M1554 187.5h1M1556 187.5h1M1561 187.5h1M1571 187.5h1M1575 187.5h1M1577 187.5h1M1559 188.5h1M1562 188.5h1M1569 188.5h1M1573 188.5h1M1548 189.5h1M1561 189.5h1M1563 189.5h1M1568 189.5h1M1570 189.5h1M1583 189.5h1M1548 190.5h1M1550 190.5h1M1563 190.5h1M1565 190.5h4M1581 190.5h1M1583 190.5h1M1552 191.5h1M1559 191.5h1M1572 191.5h1M1579 191.5h1M1548 192.5h1M1555 192.5h1M1558 192.5h1M1574 192.5h1M1576 192.5h1M1583 192.5h1M1548 193.5h2M1561 193.5h1M1570 193.5h1M1582 193.5h2M1551 194.5h1M1557 194.5h1M1562 194.5h1M1569 194.5h1M1574 194.5h1M1580 194.5h1M1548 195.5h1M1558 195.5h1M1560 195.5h1M1563 195.5h6M1571 195.5h1M1573 195.5h1M1584 195.5h1M1548 196.5h1M1554 196.5h1M1562 196.5h1M1569 196.5h1M1577 196.5h1M1583 196.5h1M1548 197.5h1M1551 197.5h1M1559 197.5h1M1561 197.5h1M1564 197.5h1M1566 197.5h2M1570 197.5h1M1572 197.5h1M1581 197.5h1M1583 197.5h1M1548 198.5h1M1557 198.5h1M1561 198.5h9M1571 198.5h1M1575 198.5h1M1583 198.5h1M1550 199.5h2M1553 199.5h1M1578 199.5h1M1580 199.5h2M1549 200.5h1M1559 200.5h1M1561 200.5h2M1564 200.5h4M1570 200.5h1M1572 200.5h1M1582 200.5h1M1550 201.5h2M1553 201.5h1M1562 201.5h3M1566 201.5h4M1579 201.5h2M1582 201.5h1M1550 202.5h1M1556 202.5h1M1561 202.5h4M1566 202.5h5M1575 202.5h1M1581 202.5h1M1552 203.5h1M1562 203.5h3M1566 203.5h5M1579 203.5h1M1551 204.5h1M1553 204.5h1M1556 204.5h1M1559 204.5h10M1570 204.5h1M1572 204.5h1M1576 204.5h1M1578 204.5h1M1580 204.5h1M1555 205.5h1M1561 205.5h3M1565 205.5h2M1568 205.5h3M1576 205.5h2M1553 206.5h2M1556 206.5h1M1558 206.5h14M1573 206.5h1M1575 206.5h1M1577 206.5h2M1555 207.5h1M1560 207.5h3M1564 207.5h4M1570 207.5h2M1576 207.5h1M1555 208.5h6M1562 208.5h8M1571 208.5h6M1557 209.5h1M1560 209.5h12M1574 209.5h1M1558 210.5h5M1564 210.5h4M1569 210.5h5M1560 211.5h1M1562 211.5h3M1567 211.5h3M1571 211.5h1M1559 212.5h8M1568 212.5h5M1560 213.5h1M1562 213.5h8M1571 213.5h1M1559 214.5h3M1563 214.5h6M1570 214.5h1M1572 214.5h1M1560 215.5h1M1562 215.5h1M1564 215.5h3M1568 215.5h2M1572 215.5h1M1559 216.5h1M1561 216.5h1M1565 216.5h2M1571 216.5h2M1560 217.5h5M1566 217.5h6M1560 218.5h2M1563 218.5h1M1565 218.5h2M1568 218.5h1M1570 218.5h2M1562 219.5h1M1564 219.5h1M1566 219.5h4M1561 220.5h4M1567 220.5h1M1569 220.5h2M1563 221.5h6M1566 222.5h1" stroke="#2edb2e" stroke-width="1" fill="none" opacity=".9"/><path d="M1083 292.5h1M1079 294.5h1M1088 294.5h1M1080 296.5h1M1086 296.5h1M1081 297.5h6M1078 298.5h12M1078 299.5h4M1083 299.5h1M1085 299.5h4M1078 300.5h12M1077 301.5h13M1077 302.5h14M1076 303.5h3M1080 303.5h2M1083 303.5h1M1085 303.5h6M1075 304.5h7M1085 304.5h7M1075 305.5h1M1077 305.5h6M1084 305.5h4M1089 305.5h3M1075 306.5h2M1078 306.5h15M1075 307.5h1M1077 307.5h1M1079 307.5h9M1089 307.5h1M1091 307.5h2M1077 308.5h1M1079 308.5h8M1088 308.5h1M1090 308.5h1M1074 309.5h6M1081 309.5h5M1087 309.5h6M1075 310.5h1M1077 310.5h1M1080 310.5h6M1087 310.5h1M1090 310.5h2M1074 311.5h7M1082 311.5h1M1084 311.5h3M1088 311.5h2M1091 311.5h2M1075 312.5h2M1083 312.5h2M1091 312.5h1M1075 313.5h1M1077 313.5h2M1080 313.5h2M1083 313.5h6M1090 313.5h2M1076 314.5h5M1083 314.5h2M1086 314.5h1M1088 314.5h4M1076 315.5h1M1080 315.5h2M1085 315.5h1M1087 315.5h1M1091 315.5h1M1077 316.5h2M1080 316.5h1M1082 316.5h1M1085 316.5h2M1088 316.5h3M1078 317.5h2M1081 317.5h4M1086 317.5h1M1088 317.5h2M1079 318.5h5M1085 318.5h3M1081 319.5h1M1083 319.5h1M1085 319.5h1M1203 292.5h1M1199 294.5h1M1201 294.5h4M1206 294.5h1M1208 294.5h1M1199 295.5h2M1203 295.5h1M1206 295.5h2M1198 296.5h7M1206 296.5h4M1197 297.5h3M1201 297.5h1M1205 297.5h1M1207 297.5h1M1209 297.5h2M1197 298.5h4M1202 298.5h4M1207 298.5h4M1196 299.5h2M1200 299.5h2M1205 299.5h2M1209 299.5h3M1196 300.5h3M1200 300.5h12M1197 301.5h14M1196 302.5h14M1211 302.5h1M1196 303.5h8M1205 303.5h7M1196 304.5h13M1210 304.5h1M1196 305.5h3M1200 305.5h3M1204 305.5h3M1208 305.5h4M1196 306.5h15M1195 307.5h2M1198 307.5h12M1211 307.5h2M1197 308.5h1M1200 308.5h8M1209 308.5h1M1195 309.5h4M1200 309.5h5M1206 309.5h2M1209 309.5h4M1196 310.5h1M1198 310.5h1M1201 310.5h6M1209 310.5h1M1211 310.5h1M1195 311.5h2M1198 311.5h2M1201 311.5h1M1203 311.5h2M1206 311.5h3M1210 311.5h3M1196 312.5h2M1199 312.5h1M1201 312.5h6M1208 312.5h2M1211 312.5h1M1196 313.5h2M1203 313.5h2M1210 313.5h2M1196 314.5h1M1198 314.5h6M1205 314.5h6M1197 315.5h1M1199 315.5h1M1202 315.5h1M1205 315.5h1M1208 315.5h2M1198 316.5h4M1203 316.5h2M1206 316.5h1M1208 316.5h2M1199 317.5h1M1201 317.5h2M1205 317.5h3M1200 318.5h4M1205 318.5h2M1324 291.5h1M1321 292.5h4M1326 292.5h3M1319 293.5h2M1328 293.5h2M1318 294.5h3M1322 294.5h3M1326 294.5h2M1329 294.5h3M1317 295.5h1M1331 295.5h1M1317 296.5h2M1320 296.5h2M1327 296.5h1M1329 296.5h2M1332 296.5h1M1316 297.5h2M1321 297.5h2M1326 297.5h3M1332 297.5h2M1316 298.5h1M1318 298.5h2M1321 298.5h1M1323 298.5h3M1328 298.5h2M1331 298.5h2M1315 299.5h2M1319 299.5h1M1330 299.5h1M1333 299.5h1M1315 300.5h3M1320 300.5h1M1322 300.5h3M1326 300.5h4M1331 300.5h3M1317 301.5h1M1319 301.5h12M1332 301.5h1M1315 302.5h2M1319 302.5h11M1332 302.5h2M1316 303.5h1M1318 303.5h14M1333 303.5h1M1316 304.5h8M1326 304.5h7M1317 305.5h14M1332 305.5h1M1317 306.5h16M1316 307.5h2M1319 307.5h11M1331 307.5h2M1319 308.5h1M1321 308.5h7M1330 308.5h1M1316 309.5h2M1319 309.5h1M1321 309.5h7M1329 309.5h4M1317 310.5h1M1319 310.5h2M1323 310.5h2M1326 310.5h1M1329 310.5h1M1331 310.5h1M1316 311.5h4M1321 311.5h2M1324 311.5h4M1329 311.5h1M1331 311.5h2M1317 312.5h1M1319 312.5h1M1321 312.5h1M1323 312.5h2M1326 312.5h1M1328 312.5h2M1332 312.5h1M1317 313.5h3M1321 313.5h3M1325 313.5h1M1327 313.5h3M1331 313.5h2M1318 314.5h1M1320 314.5h1M1322 314.5h4M1327 314.5h1M1329 314.5h1M1331 314.5h1M1319 315.5h2M1322 315.5h1M1324 315.5h2M1327 315.5h2M1330 315.5h1M1319 316.5h4M1324 316.5h1M1326 316.5h4M1321 317.5h8M1323 318.5h2M1326 318.5h1M1442 289.5h1M1444 289.5h2M1447 289.5h2M1440 290.5h2M1449 290.5h2M1438 291.5h2M1441 291.5h2M1444 291.5h1M1447 291.5h2M1450 291.5h3M1438 292.5h2M1445 292.5h1M1451 292.5h1M1453 292.5h1M1437 293.5h1M1453 293.5h1M1436 294.5h1M1438 294.5h1M1440 294.5h2M1449 294.5h1M1451 294.5h2M1454 294.5h1M1435 295.5h3M1441 295.5h1M1443 295.5h1M1448 295.5h2M1454 295.5h2M1436 296.5h1M1438 296.5h1M1442 296.5h1M1444 296.5h3M1448 296.5h1M1453 296.5h2M1435 297.5h2M1439 297.5h1M1443 297.5h1M1447 297.5h1M1451 297.5h1M1455 297.5h1M1436 298.5h2M1441 298.5h2M1444 298.5h3M1449 298.5h2M1453 298.5h2M1435 299.5h1M1439 299.5h1M1442 299.5h1M1448 299.5h1M1452 299.5h1M1455 299.5h1M1435 300.5h3M1441 300.5h1M1443 300.5h3M1447 300.5h1M1449 300.5h1M1454 300.5h2M1436 301.5h1M1438 301.5h1M1441 301.5h10M1452 301.5h1M1454 301.5h1M1436 302.5h1M1438 302.5h1M1441 302.5h10M1452 302.5h1M1455 302.5h1M1436 303.5h2M1440 303.5h5M1446 303.5h6M1453 303.5h1M1455 303.5h1M1437 304.5h9M1447 304.5h5M1453 304.5h2M1437 305.5h13M1451 305.5h3M1438 306.5h15M1438 307.5h13M1452 307.5h2M1440 308.5h1M1442 308.5h9M1438 309.5h4M1443 309.5h6M1450 309.5h1M1452 309.5h2M1438 310.5h2M1442 310.5h5M1448 310.5h2M1452 310.5h2M1438 311.5h3M1442 311.5h3M1446 311.5h1M1448 311.5h1M1450 311.5h4M1438 312.5h1M1441 312.5h2M1444 312.5h3M1448 312.5h1M1450 312.5h1M1452 312.5h1M1438 313.5h2M1441 313.5h1M1443 313.5h2M1446 313.5h2M1450 313.5h3M1439 314.5h5M1445 314.5h7M1440 315.5h4M1447 315.5h1M1449 315.5h1M1451 315.5h1M1441 316.5h10M1443 317.5h3M1447 317.5h1M1564 286.5h1M1566 286.5h2M1561 287.5h2M1569 287.5h2M1560 288.5h1M1571 288.5h1M1558 289.5h2M1561 289.5h2M1564 289.5h1M1566 289.5h2M1569 289.5h2M1572 289.5h2M1557 290.5h1M1574 290.5h1M1556 291.5h3M1573 291.5h1M1575 291.5h2M1560 292.5h1M1566 292.5h1M1572 292.5h1M1555 293.5h2M1561 293.5h1M1563 293.5h1M1568 293.5h1M1570 293.5h1M1575 293.5h1M1577 293.5h1M1555 294.5h3M1562 294.5h1M1564 294.5h1M1566 294.5h2M1570 294.5h1M1574 294.5h1M1576 294.5h1M1554 295.5h1M1559 295.5h1M1572 295.5h1M1577 295.5h1M1555 296.5h1M1561 296.5h1M1563 296.5h1M1568 296.5h1M1571 296.5h1M1576 296.5h1M1554 297.5h1M1556 297.5h1M1564 297.5h1M1567 297.5h1M1575 297.5h1M1577 297.5h1M1556 298.5h1M1558 298.5h1M1561 298.5h3M1565 298.5h6M1573 298.5h1M1575 298.5h1M1554 299.5h2M1565 299.5h3M1576 299.5h2M1555 300.5h1M1558 300.5h1M1560 300.5h1M1562 300.5h1M1564 300.5h1M1566 300.5h1M1568 300.5h2M1571 300.5h1M1573 300.5h1M1576 300.5h2M1555 301.5h1M1557 301.5h1M1562 301.5h8M1574 301.5h1M1576 301.5h1M1555 302.5h3M1560 302.5h12M1575 302.5h2M1556 303.5h2M1560 303.5h12M1575 303.5h1M1557 304.5h19M1558 305.5h3M1562 305.5h8M1571 305.5h2M1574 305.5h1M1558 306.5h16M1559 307.5h15M1560 308.5h2M1563 308.5h8M1572 308.5h1M1558 309.5h6M1565 309.5h6M1572 309.5h2M1559 310.5h2M1563 310.5h5M1569 310.5h1M1571 310.5h2M1559 311.5h1M1561 311.5h3M1565 311.5h2M1568 311.5h6M1559 312.5h2M1563 312.5h6M1571 312.5h2M1560 313.5h1M1562 313.5h6M1569 313.5h1M1571 313.5h1M1560 314.5h2M1563 314.5h2M1566 314.5h3M1570 314.5h2M1561 315.5h3M1565 315.5h2M1569 315.5h2M1562 316.5h3M1566 316.5h4M1564 317.5h1M1566 317.5h2M1081 396.5h1M1083 396.5h1M1085 396.5h1M1079 397.5h5M1085 397.5h3M1078 398.5h7M1086 398.5h4M1077 399.5h2M1081 399.5h1M1085 399.5h1M1088 399.5h1M1090 399.5h1M1076 400.5h6M1083 400.5h2M1086 400.5h3M1090 400.5h2M1075 401.5h2M1078 401.5h1M1080 401.5h3M1084 401.5h1M1086 401.5h2M1089 401.5h1M1091 401.5h2M1075 402.5h2M1078 402.5h10M1089 402.5h2M1092 402.5h1M1074 403.5h11M1086 403.5h2M1089 403.5h4M1075 404.5h2M1079 404.5h9M1090 404.5h1M1092 404.5h1M1074 405.5h3M1078 405.5h1M1080 405.5h7M1088 405.5h6M1076 406.5h1M1078 406.5h11M1090 406.5h1M1074 407.5h2M1077 407.5h1M1080 407.5h1M1082 407.5h3M1086 407.5h1M1090 407.5h1M1092 407.5h1M1075 408.5h2M1078 408.5h10M1089 408.5h1M1091 408.5h1M1075 409.5h2M1078 409.5h5M1084 409.5h1M1086 409.5h2M1089 409.5h2M1092 409.5h1M1076 410.5h3M1083 410.5h2M1088 410.5h1M1090 410.5h2M1076 411.5h1M1079 411.5h3M1083 411.5h1M1086 411.5h2M1091 411.5h1M1077 412.5h2M1080 412.5h6M1087 412.5h2M1090 412.5h1M1078 413.5h2M1081 413.5h1M1083 413.5h1M1086 413.5h1M1088 413.5h2M1079 414.5h5M1085 414.5h1M1087 414.5h1M1083 415.5h1M1203 396.5h1M1199 397.5h5M1205 397.5h1M1207 397.5h1M1198 398.5h2M1201 398.5h1M1203 398.5h1M1206 398.5h1M1208 398.5h2M1197 399.5h1M1199 399.5h2M1202 399.5h3M1206 399.5h1M1208 399.5h2M1196 400.5h3M1200 400.5h4M1205 400.5h6M1195 401.5h2M1199 401.5h1M1201 401.5h1M1203 401.5h3M1208 401.5h1M1210 401.5h2M1195 402.5h1M1197 402.5h2M1200 402.5h9M1210 402.5h2M1195 403.5h2M1198 403.5h8M1207 403.5h3M1211 403.5h2M1195 404.5h1M1197 404.5h2M1200 404.5h8M1209 404.5h3M1194 405.5h14M1209 405.5h4M1197 406.5h1M1199 406.5h9M1210 406.5h1M1195 407.5h1M1198 407.5h12M1211 407.5h2M1195 408.5h4M1200 408.5h8M1209 408.5h3M1195 409.5h2M1198 409.5h1M1200 409.5h7M1208 409.5h1M1210 409.5h2M1196 410.5h6M1205 410.5h1M1207 410.5h4M1196 411.5h2M1199 411.5h1M1201 411.5h6M1208 411.5h3M1198 412.5h4M1203 412.5h1M1206 412.5h1M1208 412.5h2M1199 413.5h5M1205 413.5h3M1201 414.5h3M1205 414.5h1M1322 397.5h3M1326 397.5h1M1321 398.5h4M1326 398.5h3M1318 399.5h3M1322 399.5h1M1324 399.5h1M1327 399.5h4M1318 400.5h10M1329 400.5h3M1317 401.5h5M1323 401.5h6M1330 401.5h3M1317 402.5h1M1319 402.5h2M1322 402.5h6M1329 402.5h2M1332 402.5h1M1316 403.5h4M1321 403.5h9M1331 403.5h2M1316 404.5h2M1319 404.5h12M1332 404.5h1M1316 405.5h2M1319 405.5h15M1317 406.5h1M1319 406.5h10M1330 406.5h1M1332 406.5h1M1316 407.5h1M1318 407.5h12M1331 407.5h2M1317 408.5h1M1319 408.5h9M1329 408.5h4M1317 409.5h2M1320 409.5h1M1323 409.5h4M1328 409.5h1M1331 409.5h2M1318 410.5h2M1321 410.5h4M1326 410.5h2M1329 410.5h3M1318 411.5h4M1324 411.5h2M1327 411.5h1M1329 411.5h2M1319 412.5h2M1322 412.5h3M1326 412.5h4M1321 413.5h4M1326 413.5h3M1324 414.5h1M1445 397.5h1M1442 398.5h4M1447 398.5h3M1441 399.5h4M1446 399.5h2M1449 399.5h2M1440 400.5h2M1443 400.5h9M1439 401.5h10M1450 401.5h2M1438 402.5h2M1441 402.5h9M1451 402.5h2M1438 403.5h16M1438 404.5h13M1452 404.5h2M1437 405.5h2M1440 405.5h11M1452 405.5h2M1439 406.5h12M1452 406.5h1M1438 407.5h16M1438 408.5h1M1440 408.5h11M1452 408.5h1M1438 409.5h3M1442 409.5h11M1439 410.5h3M1443 410.5h9M1440 411.5h4M1447 411.5h1M1449 411.5h3M1442 412.5h8M1443 413.5h3M1447 413.5h1M1564 398.5h1M1566 398.5h2M1561 399.5h10M1560 400.5h12M1560 401.5h12M1559 402.5h3M1563 402.5h3M1567 402.5h6M1558 403.5h16M1559 404.5h15M1558 405.5h11M1570 405.5h4M1559 406.5h14M1558 407.5h16M1559 408.5h14M1559 409.5h14M1560 410.5h12M1561 411.5h10M1562 412.5h3M1566 412.5h4M1566 413.5h1" stroke="#1fd81f" stroke-width="1" fill="none"/><circle cx="1083.7" cy="123" r="5.2" fill="none" stroke="#000" stroke-width="1.05"/><circle cx="1203.8" cy="123" r="5.2" fill="none" stroke="#000" stroke-width="1.05"/><circle cx="1324.8" cy="123" r="5.2" fill="none" stroke="#000" stroke-width="1.05"/><circle cx="1445.7" cy="123" r="5.2" fill="none" stroke="#000" stroke-width="1.05"/><circle cx="1566.1" cy="123" r="5.2" fill="none" stroke="#000" stroke-width="1.05"/><circle cx="1083.7" cy="217.7" r="5.2" fill="none" stroke="#000" stroke-width="1.05"/><circle cx="1203.8" cy="217.7" r="5.2" fill="none" stroke="#000" stroke-width="1.05"/><circle cx="1324.8" cy="217.7" r="5.2" fill="none" stroke="#000" stroke-width="1.05"/><circle cx="1445.7" cy="217.7" r="5.2" fill="none" stroke="#000" stroke-width="1.05"/><circle cx="1566.1" cy="217.7" r="5.2" fill="none" stroke="#000" stroke-width="1.05"/><circle cx="1083.7" cy="312" r="5.2" fill="none" stroke="#000" stroke-width="1.05"/><circle cx="1203.8" cy="312" r="5.2" fill="none" stroke="#000" stroke-width="1.05"/><circle cx="1324.8" cy="312" r="5.2" fill="none" stroke="#000" stroke-width="1.05"/><circle cx="1445.7" cy="312" r="5.2" fill="none" stroke="#000" stroke-width="1.05"/><circle cx="1566.1" cy="312" r="5.2" fill="none" stroke="#000" stroke-width="1.05"/><circle cx="1083.7" cy="405.7" r="5.2" fill="none" stroke="#000" stroke-width="1.05"/><circle cx="1203.8" cy="405.7" r="5.2" fill="none" stroke="#000" stroke-width="1.05"/><circle cx="1324.8" cy="405.7" r="5.2" fill="none" stroke="#000" stroke-width="1.05"/><circle cx="1445.7" cy="405.7" r="5.2" fill="none" stroke="#000" stroke-width="1.05"/><circle cx="1566.1" cy="405.7" r="5.2" fill="none" stroke="#000" stroke-width="1.05"/></svg>
<span class="t" style="left:1323.7px;top:449.35px;font:12px/12px 'Liberation Sans',sans-serif;transform:scaleX(0.895);">AIRY Diam. 0.0156</span>
<span class="t" style="left:1067.3px;top:466.75px;font:12px/12px 'Liberation Sans',sans-serif;transform:scaleX(0.895);">184.9711</span>
<span class="t" style="left:1179.2px;top:466.75px;font:12px/12px 'Liberation Sans',sans-serif;transform:scaleX(0.876);">185.021</span>
<span class="t" style="left:1427.6px;top:466.75px;font:12px/12px 'Liberation Sans',sans-serif;transform:scaleX(0.876);">185.121</span>
<span class="t" style="left:1539.6px;top:466.75px;font:12px/12px 'Liberation Sans',sans-serif;transform:scaleX(0.895);">185.1711</span>
<span class="t" style="left:1299.8px;top:466.75px;font:bold 12px/12px 'Liberation Sans',sans-serif;transform:scaleX(1.033);">185.0711</span>
<span class="t" style="left:1203.9px;top:485.25px;font:12px/12px 'DejaVu Sans','Liberation Sans',sans-serif;color:#0a0a5a;transform:scaleX(0.986);">&lt;---  Defocus  -</span>
<div class="b" style="left:1301.8px;top:484.1px;width:49px;height:15.5px;background:#404040;"></div>
<span class="t" style="left:1309.8px;top:485.85px;font:bold 12px/12px 'Liberation Sans',sans-serif;color:#fff;transform:scaleX(1.031);">B.F.L.</span>
<span class="t" style="left:1365.9px;top:485.25px;font:12px/12px 'DejaVu Sans','Liberation Sans',sans-serif;color:#0a0a5a;transform:scaleX(0.957);">+ Defocus ---&gt;</span>
<div class="b" style="left:1201px;top:508px;width:161px;height:31px;background:#e01818;"></div>
<div class="b" style="left:1204px;top:511px;width:154.3px;height:24.5px;background:#f0f0f0;border:1px solid #fff;border-color:#fff #707070 #707070 #fff;border-width:1px 2px 2px 1px;box-shadow:inset -1px -1px 0 #a8a8a8;"></div>
<span class="t" style="left:1222.5px;top:516.6px;font:13px/13px 'Liberation Sans',sans-serif;transform:scaleX(1.006);">Update  Multi-SPOT</span>
<div class="b" style="left:1365px;top:508px;width:88.3px;height:30.6px;background:#f08888;"></div>
<div class="b" style="left:1366.6px;top:510.8px;width:83px;height:24.4px;background:#5a5a5a;"></div>
<div class="b" style="left:1367.6px;top:511.8px;width:80.8px;height:22.2px;background:#f0f0f0;border:1px solid #fff;border-color:#fff #5e5e5e #5e5e5e #fff;border-width:1px 2px 2px 1px;box-shadow:inset -1px -1px 0 #a8a8a8;"></div>
<span class="t" style="left:1374.2px;top:516.6px;font:13px/13px 'Liberation Sans',sans-serif;">Auto Focus</span>
<div class="b" style="left:1619.2px;top:77.2px;width:70.6px;height:16.6px;background:#fff;border:1px solid #6d6d6d;box-shadow:inset -1px -1px 0 #c9c9c9;"></div>
<span class="t" style="left:1640.2px;top:79.37px;font:12px/12px 'Liberation Sans',sans-serif;transform:scaleX(0.912);">Angle</span>
<span class="t" style="left:1624.4px;top:96.25px;font:bold 12px/12px 'DejaVu Sans','Liberation Sans',sans-serif;color:#0000b4;transform:scaleX(0.842);">0.1819</span>
<div class="b" style="left:1619.2px;top:114.4px;width:70.3px;height:16.5px;background:#dedede;border:1px solid #6d6d6d;box-shadow:inset -1px -1px 0 #c9c9c9;"></div>
<span class="t" style="left:1638.95px;top:116.82px;font:12px/12px 'Liberation Sans',sans-serif;transform:scaleX(0.923);">Height</span>
<span class="t" style="left:1634.5px;top:131.25px;font:12px/12px 'Liberation Sans',sans-serif;transform:scaleX(0.899);">8.786</span>
<div class="b" style="left:1619.2px;top:181.6px;width:70.6px;height:16.6px;background:#fff;border:1px solid #6d6d6d;box-shadow:inset -1px -1px 0 #c9c9c9;"></div>
<span class="t" style="left:1640.2px;top:183.77px;font:12px/12px 'Liberation Sans',sans-serif;transform:scaleX(0.912);">Angle</span>
<span class="t" style="left:1624.4px;top:200.65px;font:bold 12px/12px 'DejaVu Sans','Liberation Sans',sans-serif;color:#0000b4;transform:scaleX(0.842);">0.12733</span>
<div class="b" style="left:1619.2px;top:218.2px;width:70.3px;height:16.5px;background:#dedede;border:1px solid #6d6d6d;box-shadow:inset -1px -1px 0 #c9c9c9;"></div>
<span class="t" style="left:1638.95px;top:220.62px;font:12px/12px 'Liberation Sans',sans-serif;transform:scaleX(0.923);">Height</span>
<span class="t" style="left:1634.5px;top:235.05px;font:12px/12px 'Liberation Sans',sans-serif;transform:scaleX(0.899);">6.150</span>
<div class="b" style="left:1619.2px;top:282.6px;width:70.6px;height:16.6px;background:#fff;border:1px solid #6d6d6d;box-shadow:inset -1px -1px 0 #c9c9c9;"></div>
<span class="t" style="left:1640.2px;top:284.77px;font:12px/12px 'Liberation Sans',sans-serif;transform:scaleX(0.912);">Angle</span>
<span class="t" style="left:1624.4px;top:301.65px;font:bold 12px/12px 'DejaVu Sans','Liberation Sans',sans-serif;color:#0000b4;transform:scaleX(0.842);">0.07276</span>
<div class="b" style="left:1619.2px;top:319.7px;width:70.3px;height:16.5px;background:#dedede;border:1px solid #6d6d6d;box-shadow:inset -1px -1px 0 #c9c9c9;"></div>
<span class="t" style="left:1638.95px;top:322.12px;font:12px/12px 'Liberation Sans',sans-serif;transform:scaleX(0.923);">Height</span>
<span class="t" style="left:1634.5px;top:336.55px;font:12px/12px 'Liberation Sans',sans-serif;transform:scaleX(0.899);">3.514</span>
<div class="b" style="left:1619.2px;top:389.7px;width:70.6px;height:16.6px;background:#fff;border:1px solid #6d6d6d;box-shadow:inset -1px -1px 0 #c9c9c9;"></div>
<span class="t" style="left:1640.2px;top:391.87px;font:12px/12px 'Liberation Sans',sans-serif;transform:scaleX(0.912);">Angle</span>
<span class="t" style="left:1643.8px;top:408.75px;font:bold 12px/12px 'DejaVu Sans','Liberation Sans',sans-serif;color:#0000b4;">0</span>
<div class="b" style="left:1619.2px;top:426.5px;width:70.3px;height:16.5px;background:#dedede;border:1px solid #6d6d6d;box-shadow:inset -1px -1px 0 #c9c9c9;"></div>
<span class="t" style="left:1638.95px;top:428.92px;font:12px/12px 'Liberation Sans',sans-serif;transform:scaleX(0.923);">Height</span>
<span class="t" style="left:1634.5px;top:443.35px;font:12px/12px 'Liberation Sans',sans-serif;transform:scaleX(0.899);">0.000</span>
<div class="b" style="left:890.5px;top:563px;width:772.8px;height:512px;background:linear-gradient(#b6c6da 0px,#c6d4e5 13.59px,#dee8f4 30.2px,#d5e2f0 32.2px);border:1px solid #47535f;border-radius:7px 7px 0 0;box-shadow:inset 1px 1px 0 rgba(255,255,255,.55);"></div>
<div class="b" style="left:898px;top:593.2px;width:757px;height:467.8px;background:#f0f0f0;"></div>
<svg class="b" style="left:900px;top:573px;" width="18" height="16" viewBox="900 573 18 16"><rect x="903" y="573.8" width="9.5" height="3.4" rx="1.6" fill="#4fd0c4" opacity=".5"/><rect x="908.6" y="579" width="5.2" height="5.6" fill="#fff"/><path d="M901.6 578.6 h3.4 v1.2 h4.1 v7.5 h-3.9 v-1.4 h-3.6 z" fill="#fff" stroke="#000" stroke-width="1.3" stroke-linejoin="miter"/><path d="M901.6 581.2 h3.6 v1 h3.9" stroke="#000" stroke-width="1" fill="none"/><path d="M902.3 579.7 h2.3 M905.7 580.9 h2.6" stroke="#35c9b2" stroke-width="1" fill="none"/><path d="M914.2 580.6 l2.2 1.8 l-2.2 1.6 z" fill="#777"/></svg>
<span class="t" style="left:920.3px;top:575.55px;font:12px/12px 'Liberation Sans',sans-serif;color:#93a0af;transform:scaleX(0.908);">RMS Spot size Versus ....</span>
<div class="b" style="left:1552.7px;top:572.4px;width:32.1px;height:17px;background:linear-gradient(#c9d6e7,#b8c7db);border:1px solid #8896ab;border-radius:3px;box-shadow:inset 0 0 0 1px rgba(255,255,255,.25);"></div>
<svg class="b" style="left:1552.7px;top:572.4px;" width="32.1" height="17" viewBox="1552.7 572.4 32.1 17"><rect x="1563.5" y="580.5" width="10" height="4" rx="1" fill="#f6f8fb" stroke="#474d56" stroke-width="1"/></svg>
<div class="b" style="left:1586.8px;top:572.4px;width:32.1px;height:17px;background:linear-gradient(#c9d6e7,#b8c7db);border:1px solid #8896ab;border-radius:3px;box-shadow:inset 0 0 0 1px rgba(255,255,255,.25);"></div>
<svg class="b" style="left:1586.8px;top:572.4px;" width="32.1" height="17" viewBox="1586.8 572.4 32.1 17"><rect x="1597.5" y="576.5" width="10" height="8" rx="1" fill="#f6f8fb" stroke="#474d56" stroke-width="1"/><rect x="1600.5" y="579.5" width="4" height="2" fill="#c3cedd" stroke="#474d56" stroke-width="1"/></svg>
<div class="b" style="left:1620.9px;top:572.4px;width:32.1px;height:17px;background:linear-gradient(#c9d6e7,#b8c7db);border:1px solid #8896ab;border-radius:3px;box-shadow:inset 0 0 0 1px rgba(255,255,255,.25);"></div>
<svg class="b" style="left:1620.9px;top:572.4px;" width="32.1" height="17" viewBox="1620.9 572.4 32.1 17"><path d="M1631.05 576.5 h3.8 l1.8 2.09 l1.8 -2.09 h3.8 l-3.7 4.3 l3.7 4.3 h-3.8 l-1.8 -2.09 l-1.8 2.09 h-3.8 l3.7 -4.3 z" fill="#f6f8fb" stroke="#474d56" stroke-width="1" stroke-linejoin="round"/></svg>
<div class="b" style="left:906px;top:596.3px;width:575.8px;height:16.5px;background:#f0f0f0;border:1px solid #5c5c5c;"></div>
<span class="t" style="left:1123.2px;top:598.25px;font:bold 12px/12px 'Liberation Sans',sans-serif;transform:scaleX(1.006);">C11-ATMOS-auto-v5.atm</span>
<div class="b" style="left:1106px;top:625.2px;width:81px;height:32.5px;background:#f0f0f0;border:1px solid #fff;border-color:#fff #5e5e5e #5e5e5e #fff;border-width:1px 2px 2px 1px;box-shadow:inset -1px -1px 0 #a8a8a8;"></div>
<span class="t" style="left:1120.4px;top:635.75px;font:12px/12px 'Liberation Sans',sans-serif;transform:scaleX(0.906);">AutoFocus</span>
<div class="b" style="left:1218px;top:621px;width:120px;height:35.7px;background:#f0f0f0;border:1px solid #fff;border-color:#fff #8a8a8a #8a8a8a #fff;border-width:1px 2px 2px 1px;box-shadow:inset -1px -1px 0 #a8a8a8;"></div>
<span class="t" style="left:1239.5px;top:626.45px;font:bold 12px/12px 'Liberation Sans',sans-serif;transform:scaleX(0.996);">RMS spot size</span>
<span class="t" style="left:1267.7px;top:638.75px;font:bold 12px/12px 'Liberation Sans',sans-serif;transform:scaleX(0.989);">vs. Field</span>
<div class="b" style="left:1354.2px;top:620.5px;width:120px;height:36.2px;background:#f0f0f0;border:1px solid #fff;border-color:#fff #8a8a8a #8a8a8a #fff;border-width:1px 2px 2px 1px;box-shadow:inset -1px -1px 0 #a8a8a8;"></div>
<span class="t" style="left:1369.2px;top:626.45px;font:bold 12px/12px 'Liberation Sans',sans-serif;color:#a6a6a6;transform:scaleX(0.996);">RMS spot size</span>
<span class="t" style="left:1367.7px;top:638.75px;font:bold 12px/12px 'Liberation Sans',sans-serif;color:#a6a6a6;transform:scaleX(1.017);">vs. WaveLength</span>
<div class="b" style="left:1489.8px;top:620.5px;width:120.5px;height:36.2px;background:#f0f0f0;border:1px solid #fff;border-color:#fff #8a8a8a #8a8a8a #fff;border-width:1px 2px 2px 1px;box-shadow:inset -1px -1px 0 #a8a8a8;"></div>
<span class="t" style="left:1507.2px;top:626.45px;font:bold 12px/12px 'Liberation Sans',sans-serif;color:#a6a6a6;transform:scaleX(0.996);">RMS spot size</span>
<span class="t" style="left:1534.5px;top:638.75px;font:bold 12px/12px 'Liberation Sans',sans-serif;color:#a6a6a6;transform:scaleX(0.975);">vs. Focus</span>
<div class="b" style="left:906.1px;top:671.4px;width:191.6px;height:216.9px;border:1px solid #a6a6a6;box-shadow:1px 1px 0 #fff, inset 1px 1px 0 #fff;"></div>
<span class="t" style="left:914.8px;top:690.35px;font:12px/12px 'Liberation Sans',sans-serif;transform:scaleX(0.892);">Reference  BFL</span>
<span class="t" style="left:1028px;top:690.35px;font:12px/12px 'Liberation Sans',sans-serif;transform:scaleX(0.879);">186.1081</span>
<span class="t" style="left:914.8px;top:717.25px;font:bold 12px/12px 'Liberation Sans',sans-serif;transform:scaleX(0.943);">Actual   BFL</span>
<div class="b" style="left:1010px;top:713px;width:79px;height:18.5px;background:#fff;border:1px solid #6a6a6a;"></div>
<span class="t" style="left:1014.5px;top:716.85px;font:12px/12px 'Liberation Sans',sans-serif;">185.0711</span>
<span class="t" style="left:914.8px;top:749.05px;font:bold 12px/12px 'Liberation Sans',sans-serif;transform:scaleX(0.993);">Y-Field Angle</span>
<div class="b" style="left:1010px;top:745.3px;width:79px;height:18.5px;background:#fff;border:1px solid #6a6a6a;"></div>
<span class="t" style="left:1014.5px;top:749.15px;font:12px/12px 'Liberation Sans',sans-serif;">.1819</span>
<span class="t" style="left:914.8px;top:768.25px;font:bold 12px/12px 'Liberation Sans',sans-serif;transform:scaleX(0.984);">X-Field Angle</span>
<div class="b" style="left:1010px;top:765.3px;width:79px;height:18.5px;background:#fff;border:1px solid #6a6a6a;"></div>
<span class="t" style="left:1012.5px;top:769.15px;font:12px/12px 'Liberation Sans',sans-serif;">0</span>
<span class="t" style="left:914.8px;top:824.15px;font:bold 12px/12px 'Liberation Sans',sans-serif;">Field Curv.Rad.</span>
<div class="b" style="left:1010px;top:820.4px;width:79px;height:18.5px;background:#fff;border:1px solid #6a6a6a;"></div>
<span class="t" style="left:1012.5px;top:824.25px;font:12px/12px 'Liberation Sans',sans-serif;">0</span>
<span class="t" style="left:945.2px;top:858.56px;font:14px/14px 'Liberation Sans',sans-serif;transform:scaleX(0.971);">Scale</span>
<div class="b" style="left:1010px;top:857.2px;width:79px;height:18.5px;background:#fff;border:1px solid #6a6a6a;"></div>
<span class="t" style="left:1012.5px;top:861.05px;font:12px/12px 'Liberation Sans',sans-serif;">0</span>
<div class="b" style="left:906.1px;top:903.3px;width:191.6px;height:136.9px;border:1px solid #a6a6a6;box-shadow:1px 1px 0 #fff, inset 1px 1px 0 #fff;"></div>
<div class="b" style="left:912px;top:897px;width:141px;height:13px;background:#f0f0f0;"></div>
<span class="t" style="left:914.8px;top:898.05px;font:bold 12px/12px 'Liberation Sans',sans-serif;transform:scaleX(1.009);">WaveLengths Selection</span>
<div class="b" style="left:924.8px;top:921.2px;width:73px;height:16.2px;background:#05f805;"></div>
<span class="t" style="left:927.5px;top:922.65px;font:bold 12px/12px 'Liberation Sans',sans-serif;transform:scaleX(1.035);">0.6562</span>
<div class="b" style="left:985.3px;top:922.7px;width:12px;height:12.5px;background:#fff;border:1px solid #777;border-width:1px;border-color:#555;"></div>
<svg class="b" style="left:985.3px;top:922.2px;" width="13" height="13" viewBox="985.3 922.2 13 13"><path d="M987.7 928.4 l2.6 3 l4.6 -6.2" fill="none" stroke="#000" stroke-width="1.8"/></svg>
<div class="b" style="left:1003.2px;top:921.2px;width:73px;height:16.2px;background:#ff00ff;"></div>
<span class="t" style="left:1006.2px;top:923.65px;font:bold 12px/12px 'Liberation Sans',sans-serif;color:#fff;transform:scaleX(1.008);text-shadow:1px 0 0 #444,-1px 0 0 #444,0 1px 0 #444,0 -1px 0 #444,1px 1px 0 #555;">0.0000</span>
<div class="b" style="left:1063.7px;top:922.7px;width:12px;height:12.5px;background:#f0f0f0;border:1px solid #777;border-width:2px 0 0 2px;border-color:#6a6a6a;"></div>
<div class="b" style="left:924.8px;top:937.35px;width:73px;height:16.2px;background:#0000ff;"></div>
<span class="t" style="left:927.8px;top:939.8px;font:bold 12px/12px 'Liberation Sans',sans-serif;color:#fff;transform:scaleX(1.008);text-shadow:1px 0 0 #444,-1px 0 0 #444,0 1px 0 #444,0 -1px 0 #444,1px 1px 0 #555;">0.0000</span>
<div class="b" style="left:985.3px;top:938.85px;width:12px;height:12.5px;background:#f0f0f0;border:1px solid #777;border-width:2px 0 0 2px;border-color:#6a6a6a;"></div>
<div class="b" style="left:1003.2px;top:937.35px;width:73px;height:16.2px;background:#804000;"></div>
<span class="t" style="left:1006.2px;top:939.8px;font:bold 12px/12px 'Liberation Sans',sans-serif;color:#fff;transform:scaleX(1.008);text-shadow:1px 0 0 #444,-1px 0 0 #444,0 1px 0 #444,0 -1px 0 #444,1px 1px 0 #555;">0.0000</span>
<div class="b" style="left:1063.7px;top:938.85px;width:12px;height:12.5px;background:#f0f0f0;border:1px solid #777;border-width:2px 0 0 2px;border-color:#6a6a6a;"></div>
<div class="b" style="left:924.8px;top:953.5px;width:73px;height:16.2px;background:#ff0000;"></div>
<span class="t" style="left:927.8px;top:955.95px;font:bold 12px/12px 'Liberation Sans',sans-serif;color:#fff;transform:scaleX(1.008);text-shadow:1px 0 0 #444,-1px 0 0 #444,0 1px 0 #444,0 -1px 0 #444,1px 1px 0 #555;">0.0000</span>
<div class="b" style="left:985.3px;top:955px;width:12px;height:12.5px;background:#f0f0f0;border:1px solid #777;border-width:2px 0 0 2px;border-color:#6a6a6a;"></div>
<div class="b" style="left:1003.2px;top:953.5px;width:73px;height:16.2px;background:#8000c0;"></div>
<span class="t" style="left:1006.2px;top:955.95px;font:bold 12px/12px 'Liberation Sans',sans-serif;color:#fff;transform:scaleX(1.008);text-shadow:1px 0 0 #444,-1px 0 0 #444,0 1px 0 #444,0 -1px 0 #444,1px 1px 0 #555;">0.0000</span>
<div class="b" style="left:1063.7px;top:955px;width:12px;height:12.5px;background:#f0f0f0;border:1px solid #777;border-width:2px 0 0 2px;border-color:#6a6a6a;"></div>
<div class="b" style="left:1106.3px;top:669.5px;width:546.5px;height:380px;background:#fff;border:1px solid #9a9a9a;"></div>
<svg class="b" style="left:1107px;top:670px;" width="545" height="378" viewBox="1107 670 545 378"><path d="M1154.2 705.5 H1628.3 M1154.2 722.5 H1628.3 M1154.2 739.5 H1628.3 M1154.2 757.5 H1628.3 M1154.2 774.5 H1628.3 M1154.2 791.5 H1628.3 M1154.2 808.5 H1628.3 M1154.2 826.5 H1628.3 M1154.2 843.5 H1628.3 M1154.2 860.5 H1628.3 M1154.2 877.5 H1628.3 M1154.2 895.5 H1628.3 M1154.2 912.5 H1628.3 M1154.2 929.5 H1628.3 M1154.2 946.5 H1628.3 M1154.2 964.5 H1628.3 M1154.2 981.5 H1628.3 M1154.2 998.5 H1628.3 M1154.2 1015.5 H1628.3 M1202.5 687.6 V1032.6 M1249.5 687.6 V1032.6 M1296.5 687.6 V1032.6 M1344.5 687.6 V1032.6 M1391.5 687.6 V1032.6 M1439.5 687.6 V1032.6 M1486.5 687.6 V1032.6 M1533.5 687.6 V1032.6 M1581.5 687.6 V1032.6 " stroke="#e9e9e9" stroke-width="1" fill="none"/><path d="M1154.2 974.5 H1628.3" stroke="#808080" stroke-width="1"/><rect x="1154.5" y="687.9" width="474.1" height="345" fill="none" stroke="#000" stroke-width="1.3"/><polyline points="1154.2,983.6 1178,982.4 1203.5,980.2 1250,972.5 1297.4,963.5 1344.2,951 1391.5,937 1439.2,923.2 1486.5,908.2 1534.3,892.6 1581.6,875.9 1628.3,859.2" fill="none" stroke="#dd1010" stroke-width="2"/></svg>
<span class="t" style="left:1154.2px;top:670.75px;font:12px/12px 'Liberation Sans',sans-serif;transform:scaleX(0.879);">RMS spot radius</span>
<span class="t" style="left:1112.6px;top:684.75px;font:12px/12px 'Liberation Sans',sans-serif;transform:scaleX(0.899);">0.0466</span>
<span class="t" style="left:1112.6px;top:701.96px;font:12px/12px 'Liberation Sans',sans-serif;transform:scaleX(0.899);">0.0443</span>
<span class="t" style="left:1112.6px;top:719.18px;font:12px/12px 'Liberation Sans',sans-serif;transform:scaleX(0.899);">0.0419</span>
<span class="t" style="left:1112.6px;top:736.39px;font:12px/12px 'Liberation Sans',sans-serif;transform:scaleX(0.899);">0.0396</span>
<span class="t" style="left:1112.6px;top:753.61px;font:12px/12px 'Liberation Sans',sans-serif;transform:scaleX(0.899);">0.0373</span>
<span class="t" style="left:1112.6px;top:770.82px;font:12px/12px 'Liberation Sans',sans-serif;transform:scaleX(0.899);">0.0349</span>
<span class="t" style="left:1112.6px;top:788.04px;font:12px/12px 'Liberation Sans',sans-serif;transform:scaleX(0.899);">0.0326</span>
<span class="t" style="left:1112.6px;top:805.25px;font:12px/12px 'Liberation Sans',sans-serif;transform:scaleX(0.899);">0.0303</span>
<span class="t" style="left:1112.6px;top:822.47px;font:12px/12px 'Liberation Sans',sans-serif;transform:scaleX(0.899);">0.0279</span>
<span class="t" style="left:1112.6px;top:839.68px;font:12px/12px 'Liberation Sans',sans-serif;transform:scaleX(0.899);">0.0256</span>
<span class="t" style="left:1112.6px;top:856.9px;font:12px/12px 'Liberation Sans',sans-serif;transform:scaleX(0.899);">0.0233</span>
<span class="t" style="left:1112.6px;top:874.11px;font:12px/12px 'Liberation Sans',sans-serif;transform:scaleX(0.899);">0.0210</span>
<span class="t" style="left:1112.6px;top:891.33px;font:12px/12px 'Liberation Sans',sans-serif;transform:scaleX(0.899);">0.0186</span>
<span class="t" style="left:1112.6px;top:908.54px;font:12px/12px 'Liberation Sans',sans-serif;transform:scaleX(0.899);">0.0163</span>
<span class="t" style="left:1112.6px;top:925.76px;font:12px/12px 'Liberation Sans',sans-serif;transform:scaleX(0.899);">0.0140</span>
<span class="t" style="left:1112.6px;top:942.97px;font:12px/12px 'Liberation Sans',sans-serif;transform:scaleX(0.921);">0.0116</span>
<span class="t" style="left:1112.6px;top:960.19px;font:12px/12px 'Liberation Sans',sans-serif;transform:scaleX(0.899);">0.0093</span>
<span class="t" style="left:1112.6px;top:977.4px;font:12px/12px 'Liberation Sans',sans-serif;transform:scaleX(0.899);">0.0070</span>
<span class="t" style="left:1112.6px;top:994.62px;font:12px/12px 'Liberation Sans',sans-serif;transform:scaleX(0.899);">0.0047</span>
<span class="t" style="left:1112.6px;top:1011.83px;font:12px/12px 'Liberation Sans',sans-serif;transform:scaleX(0.899);">0.0023</span>
<span class="t" style="left:1153.7px;top:1035.65px;font:12px/12px 'Liberation Sans',sans-serif;">0</span>
<span class="t" style="left:1377.5px;top:1035.65px;font:12px/12px 'Liberation Sans',sans-serif;transform:scaleX(0.899);">0.09</span>
<span class="t" style="left:1619.6px;top:1035.65px;font:12px/12px 'Liberation Sans',sans-serif;transform:scaleX(0.899);">0.18</span>
<span class="t" style="left:1630.8px;top:968.45px;font:12px/12px 'Liberation Sans',sans-serif;transform:scaleX(0.847);">Airy</span>
<span class="t" style="left:1628.6px;top:1020.75px;font:12px/12px 'Liberation Sans',sans-serif;transform:scaleX(0.846);">Field</span>
</body></html>
